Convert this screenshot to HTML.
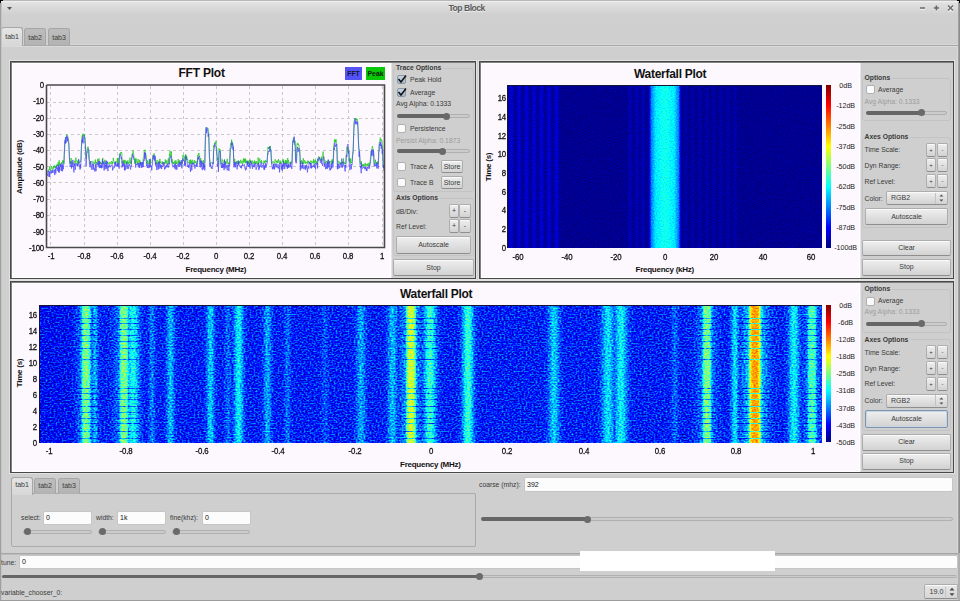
<!DOCTYPE html>
<html><head><meta charset="utf-8">
<style>
*{margin:0;padding:0;box-sizing:border-box}
html,body{width:960px;height:601px;overflow:hidden;background:#cfcfcf;font-family:"Liberation Sans",sans-serif;color:#333}
.a{position:absolute}
.t{position:absolute;white-space:nowrap;font-size:6.8px;line-height:7px;color:#3a3a3a}
.b{font-weight:bold}
.tk{position:absolute;white-space:nowrap;font-size:9.3px;line-height:8px;color:#111;letter-spacing:-0.2px;transform:scaleX(0.84);-webkit-text-stroke:0.3px #111}
.btn{position:absolute;border:1px solid #adadad;border-bottom-color:#8e8e8e;border-radius:2px;background:linear-gradient(#efefef,#d2d2d2);box-shadow:inset 0 1px 0 #fafafa;font-size:7px;color:#3a3a3a;text-align:center;white-space:nowrap}
.cb{position:absolute;width:9px;height:9px;border:1px solid #b0b0b0;border-radius:2px;background:#fbfbfb}
.cbc{background:linear-gradient(#c8d4e0,#a9b9cc);border-color:#8897a8}
.grp{position:absolute;border:1px solid #c3c3c3;border-radius:3px}
.frame{position:absolute;border:1px solid #484848;box-shadow:0 0 0 1px #e2e2e2, inset 1px 1px 0 #808080}
.plot{position:absolute;background:#fdf8fd;box-shadow:inset 1px 1px 0 #fff, inset -1px -1px 0 #fff}
.side{position:absolute;background:#cfcfcf;border-left:1px solid #e4e4e4}
.groove{position:absolute;height:3.5px;margin-top:0.25px;border-radius:2px;background:#cbcbcb;border:1px solid #b0b0b0}
.gfill{position:absolute;height:3.5px;margin-top:0.25px;border-radius:2px;background:#666}
.handle{position:absolute;width:7px;height:7px;margin:0.5px 0 0 0.5px;border-radius:50%;background:#6a6a6a}
.field{position:absolute;background:#fcfcfc;border:1px solid #c6c6c6;border-radius:2px;font-size:7px;color:#111;padding-left:2px;white-space:nowrap}
.tab{position:absolute;border:1px solid #a6a6a6;border-bottom:none;border-radius:3px 3px 0 0;background:linear-gradient(#bdbdbd,#b3b3b3);font-size:7px;color:#3a3a3a;text-align:center}
.tabsel{background:linear-gradient(#e4e4e4,#d7d7d7)}
.grid{position:absolute}
.tkc{position:absolute;white-space:nowrap;font-size:7.1px;line-height:8px;color:#1a1a1a}
</style></head><body>
<!-- title bar -->
<div class="a" style="left:0;top:0;width:960px;height:24px;background:linear-gradient(#b8b8b8 0,#b8b8b8 1px,#f2f2f2 1px,#e0e0e0 3px,#d0d0d0 15px)"></div>
<div class="a" style="left:0;top:2px;width:1px;height:599px;background:#a0a0a0"></div>
<div class="a" style="left:957px;top:46px;width:1px;height:507px;background:#d8d8d8"></div><div class="a" style="left:958px;top:2px;width:2px;height:551px;background:linear-gradient(90deg,#a8a8a8,#858585)"></div><div class="a" style="left:958px;top:553px;width:2px;height:48px;background:#b0b0b0"></div>
<div class="a" style="left:0;top:600px;width:960px;height:1px;background:#9c9c9c"></div>
<div class="t b" style="left:448.5px;top:4px;font-size:8.6px;line-height:9px;color:#5a5a5a;letter-spacing:-0.5px;text-shadow:0 1px 0 rgba(255,255,255,0.6)">Top Block</div>
<svg class="a" style="left:0;top:0" width="960" height="16">
 <g stroke="#fff" stroke-width="1.6" opacity="0.7"><path d="M920 9h5M933.8 9h5.2M936.4 6.5v5M948 6.6L953 11.6M953 6.6L948 11.6"/></g>
 <g stroke="#686868" stroke-width="1.6"><path d="M920 8h5M933.8 8h5.2M936.4 5.5v5"/><path d="M948 5.6L953 10.6M953 5.6L948 10.6" stroke-width="1.4"/></g>
 <path d="M7 7h5l-2.5 3z" fill="#555"/>
 <path d="M0 0h3v1h-2v2h-1z M960 0h-3v1h2v2h1z" fill="#000"/>
</svg>

<!-- top tabs -->
<div class="a" style="left:1px;top:44px;width:957px;height:1px;background:#d8d8d8"></div><div class="a" style="left:1px;top:45px;width:957px;height:1px;background:#a8a8a8"></div><div class="a" style="left:1px;top:46px;width:957px;height:1px;background:#dadada"></div>
<div class="tab" style="left:24px;top:28px;width:22px;height:17px;line-height:17px">tab2</div>
<div class="tab" style="left:48px;top:28px;width:22px;height:17px;line-height:17px">tab3</div>
<div class="tab tabsel" style="left:1px;top:27px;width:22px;height:19px;line-height:18px">tab1</div>
<div class="a" style="left:1px;top:3px;width:1px;height:597px;background:#c4c4c4"></div>
<div class="a" style="left:1px;top:553px;width:957px;height:1px;background:#a6a6a6"></div><div class="a" style="left:1px;top:554px;width:957px;height:1px;background:#bcbcbc"></div>

<!-- ===== FFT frame ===== -->
<div class="frame" style="left:10px;top:61px;width:466px;height:218px"></div>
<div class="plot" style="left:12px;top:63px;width:379px;height:215px"></div>
<div class="side" style="left:391px;top:63px;width:84px;height:215px"></div>
<div class="t b" style="left:178.5px;top:67px;font-size:12px;line-height:12px;color:#111;letter-spacing:-0.22px">FFT Plot</div>
<div class="a" style="left:345px;top:67px;width:17px;height:13px;background:#5252f6;font-size:6.8px;font-weight:bold;line-height:13.5px;text-align:center;color:#151530">FFT</div>
<div class="a" style="left:366px;top:67px;width:19px;height:13px;background:#08c808;font-size:6.8px;font-weight:bold;line-height:13.5px;text-align:center;color:#0a200a">Peak</div>
<svg class="a" style="left:0;top:0" width="960" height="601">
 <g stroke="#c9c9c9" stroke-width="1" stroke-dasharray="3,3" shape-rendering="crispEdges">
  <path d="M47 102.5H384"/>
<path d="M47 118.5H384"/>
<path d="M47 134.5H384"/>
<path d="M47 150.5H384"/>
<path d="M47 166.5H384"/>
<path d="M47 182.5H384"/>
<path d="M47 199.5H384"/>
<path d="M47 215.5H384"/>
<path d="M47 231.5H384"/>
<path d="M50.5 86V247"/>
<path d="M84.5 86V247"/>
<path d="M117.5 86V247"/>
<path d="M150.5 86V247"/>
<path d="M183.5 86V247"/>
<path d="M216.5 86V247"/>
<path d="M249.5 86V247"/>
<path d="M282.5 86V247"/>
<path d="M315.5 86V247"/>
<path d="M348.5 86V247"/>
<path d="M382.5 86V247"/>
 </g>
 <polyline fill="none" stroke="#18c818" stroke-width="0.7" points="47.0,171.1 47.3,171.4 47.7,171.5 48.0,170.8 48.4,171.0 48.7,171.0 49.0,169.2 49.4,169.9 49.7,166.8 50.1,169.7 50.4,170.6 50.7,169.0 51.1,169.4 51.4,166.0 51.8,167.1 52.1,168.1 52.4,169.4 52.8,168.9 53.1,167.1 53.5,166.2 53.8,168.5 54.1,165.3 54.5,165.6 54.8,167.8 55.2,166.4 55.5,168.1 55.8,166.1 56.2,165.6 56.5,166.9 56.9,164.4 57.2,165.9 57.5,164.2 57.9,165.8 58.2,162.0 58.6,166.2 58.9,165.2 59.2,160.3 59.6,164.5 59.9,163.8 60.3,165.6 60.6,164.8 60.9,164.1 61.3,164.2 61.6,162.2 62.0,163.9 62.3,163.5 62.6,160.4 63.0,162.2 63.3,160.6 63.7,164.0 64.0,160.7 64.3,150.6 64.7,143.7 65.0,141.2 65.4,137.6 65.7,137.8 66.0,137.8 66.4,136.9 66.7,135.0 67.1,134.5 67.4,136.4 67.7,136.4 68.1,139.1 68.4,139.2 68.8,141.3 69.1,149.2 69.4,156.6 69.8,163.4 70.1,163.3 70.5,161.9 70.8,163.3 71.1,158.0 71.5,163.6 71.8,163.6 72.2,162.6 72.5,162.9 72.8,163.3 73.2,164.0 73.5,164.0 73.9,163.0 74.2,161.4 74.5,161.9 74.9,160.6 75.2,163.3 75.6,162.7 75.9,157.7 76.2,160.7 76.6,160.6 76.9,161.3 77.3,163.7 77.6,163.9 77.9,160.5 78.3,163.5 78.6,161.4 79.0,163.5 79.3,162.5 79.6,162.6 80.0,160.5 80.3,161.9 80.7,160.6 81.0,160.0 81.3,149.5 81.7,139.3 82.0,136.1 82.4,134.8 82.7,137.2 83.0,133.6 83.4,135.2 83.7,135.7 84.1,134.6 84.4,134.3 84.7,138.5 85.1,137.9 85.4,144.6 85.8,154.0 86.1,158.4 86.4,152.1 86.8,151.0 87.1,149.3 87.5,147.4 87.8,147.9 88.1,146.7 88.5,149.2 88.8,149.8 89.2,151.5 89.5,159.3 89.8,164.1 90.2,163.6 90.5,164.1 90.9,161.8 91.2,161.1 91.5,161.6 91.9,162.7 92.2,162.3 92.6,162.2 92.9,161.3 93.2,162.6 93.6,162.8 93.9,162.3 94.3,163.9 94.6,163.3 94.9,163.4 95.3,159.5 95.6,163.5 96.0,162.1 96.3,163.1 96.6,162.4 97.0,163.4 97.3,162.6 97.7,159.1 98.0,161.0 98.3,163.1 98.7,159.9 99.0,158.3 99.4,162.5 99.7,163.9 100.0,162.0 100.4,164.0 100.7,162.2 101.1,163.7 101.4,163.3 101.7,163.9 102.1,162.1 102.4,161.4 102.8,157.9 103.1,163.0 103.4,163.2 103.8,162.9 104.1,161.7 104.5,162.5 104.8,159.8 105.1,162.6 105.5,163.7 105.8,161.8 106.2,161.7 106.5,160.9 106.8,161.8 107.2,162.2 107.5,163.6 107.9,162.4 108.2,162.9 108.5,163.9 108.9,163.3 109.2,163.7 109.6,162.3 109.9,162.2 110.2,164.2 110.6,163.8 110.9,163.8 111.3,161.1 111.6,161.6 111.9,163.7 112.3,161.8 112.6,164.0 113.0,162.4 113.3,157.8 113.6,160.4 114.0,160.9 114.3,162.9 114.7,163.8 115.0,162.5 115.3,162.7 115.7,161.8 116.0,161.6 116.4,162.4 116.7,161.6 117.0,162.0 117.4,158.0 117.7,163.7 118.1,157.9 118.4,162.1 118.7,164.2 119.1,163.7 119.4,154.6 119.8,155.5 120.1,153.0 120.4,153.6 120.8,152.1 121.1,152.9 121.5,152.1 121.8,152.6 122.1,162.8 122.5,164.1 122.8,160.8 123.2,162.9 123.5,162.0 123.8,159.8 124.2,161.9 124.5,164.1 124.9,159.9 125.2,161.6 125.5,160.8 125.9,163.6 126.2,162.5 126.6,161.4 126.9,163.0 127.2,161.6 127.6,164.2 127.9,160.3 128.3,164.1 128.6,163.4 128.9,162.3 129.3,163.3 129.6,162.6 130.0,157.6 130.3,164.1 130.6,163.7 131.0,160.8 131.3,163.4 131.7,157.0 132.0,154.3 132.3,154.7 132.7,153.2 133.0,150.4 133.4,152.2 133.7,154.7 134.0,156.3 134.4,158.6 134.7,163.4 135.1,163.9 135.4,158.4 135.7,163.6 136.1,158.5 136.4,161.1 136.8,161.9 137.1,163.8 137.4,161.6 137.8,161.7 138.1,159.0 138.5,164.1 138.8,164.1 139.1,163.6 139.5,162.5 139.8,159.9 140.2,164.1 140.5,163.2 140.8,162.5 141.2,163.0 141.5,162.4 141.9,164.2 142.2,162.2 142.5,163.4 142.9,161.4 143.2,158.6 143.6,156.5 143.9,156.2 144.2,150.5 144.6,151.0 144.9,149.7 145.3,152.9 145.6,154.2 145.9,153.9 146.3,156.1 146.6,163.4 147.0,163.6 147.3,163.8 147.6,160.4 148.0,163.9 148.3,162.5 148.7,163.3 149.0,162.9 149.3,159.1 149.7,164.2 150.0,159.7 150.4,163.8 150.7,163.2 151.0,163.3 151.4,162.3 151.7,162.0 152.1,161.7 152.4,159.7 152.7,155.9 153.1,155.1 153.4,154.6 153.8,154.4 154.1,153.4 154.4,153.7 154.8,155.5 155.1,157.8 155.5,163.8 155.8,163.4 156.1,162.5 156.5,164.2 156.8,160.7 157.2,159.9 157.5,163.9 157.8,163.3 158.2,163.7 158.5,162.8 158.9,160.9 159.2,163.4 159.5,163.2 159.9,158.8 160.2,162.6 160.6,162.9 160.9,161.4 161.2,163.6 161.6,163.7 161.9,163.1 162.3,164.0 162.6,161.6 162.9,163.3 163.3,162.4 163.6,162.4 164.0,163.3 164.3,163.7 164.6,164.2 165.0,163.3 165.3,159.4 165.7,163.6 166.0,162.0 166.3,162.7 166.7,160.4 167.0,164.1 167.4,163.8 167.7,162.6 168.0,160.2 168.4,158.4 168.7,164.2 169.1,159.2 169.4,154.5 169.7,156.1 170.1,150.8 170.4,156.3 170.8,156.4 171.1,155.2 171.4,151.4 171.8,162.0 172.1,159.0 172.5,163.6 172.8,162.2 173.1,162.6 173.5,164.0 173.8,162.0 174.2,163.8 174.5,163.8 174.8,160.7 175.2,161.9 175.5,163.4 175.9,160.3 176.2,162.0 176.5,163.8 176.9,161.8 177.2,163.5 177.6,164.0 177.9,163.3 178.2,159.0 178.6,162.6 178.9,163.3 179.3,160.3 179.6,162.4 179.9,164.1 180.3,162.5 180.6,164.0 181.0,161.4 181.3,162.6 181.6,163.0 182.0,163.0 182.3,163.5 182.7,156.7 183.0,154.9 183.3,156.5 183.7,155.8 184.0,157.8 184.4,156.7 184.7,163.3 185.0,163.5 185.4,154.9 185.7,154.2 186.1,156.9 186.4,156.1 186.7,155.9 187.1,157.5 187.4,160.0 187.8,159.5 188.1,163.1 188.4,162.5 188.8,163.2 189.1,162.6 189.5,162.4 189.8,160.1 190.1,163.2 190.5,159.6 190.8,164.1 191.2,160.9 191.5,164.1 191.8,163.5 192.2,159.7 192.5,163.7 192.9,163.1 193.2,163.7 193.5,163.2 193.9,162.2 194.2,160.0 194.6,163.8 194.9,162.3 195.2,161.9 195.6,162.9 195.9,160.9 196.3,162.9 196.6,164.0 196.9,162.8 197.3,162.7 197.6,155.3 198.0,156.0 198.3,153.6 198.6,154.5 199.0,153.0 199.3,156.8 199.7,156.1 200.0,161.3 200.3,162.2 200.7,158.0 201.0,163.0 201.4,162.6 201.7,164.0 202.0,162.1 202.4,161.4 202.7,163.8 203.1,163.9 203.4,160.1 203.7,162.4 204.1,162.1 204.4,162.6 204.8,162.5 205.1,149.7 205.4,134.2 205.8,132.1 206.1,129.3 206.5,130.3 206.8,128.6 207.1,127.5 207.5,128.2 207.8,128.4 208.2,128.5 208.5,131.3 208.8,133.9 209.2,147.2 209.5,157.8 209.9,159.1 210.2,163.4 210.5,163.5 210.9,163.2 211.2,162.4 211.6,162.7 211.9,162.6 212.2,162.6 212.6,163.3 212.9,163.7 213.3,160.6 213.6,145.4 213.9,146.7 214.3,145.4 214.6,142.7 215.0,142.6 215.3,143.9 215.6,143.6 216.0,140.9 216.3,146.3 216.7,148.1 217.0,155.7 217.3,157.9 217.7,159.8 218.0,157.7 218.4,163.9 218.7,163.5 219.0,148.4 219.4,150.6 219.7,149.0 220.1,149.7 220.4,151.3 220.7,157.4 221.1,162.4 221.4,164.1 221.8,163.8 222.1,159.4 222.4,159.5 222.8,160.5 223.1,162.2 223.5,162.5 223.8,162.0 224.1,161.8 224.5,159.5 224.8,162.4 225.2,162.4 225.5,164.0 225.8,161.0 226.2,163.7 226.5,163.4 226.9,162.5 227.2,158.8 227.5,162.4 227.9,164.1 228.2,163.9 228.6,162.5 228.9,163.8 229.2,162.9 229.6,163.8 229.9,158.7 230.3,147.2 230.6,143.6 230.9,144.5 231.3,142.5 231.6,139.7 232.0,142.6 232.3,142.5 232.6,142.3 233.0,145.6 233.3,148.2 233.7,157.2 234.0,162.1 234.3,162.7 234.7,158.9 235.0,163.4 235.4,163.2 235.7,162.7 236.0,164.0 236.4,163.7 236.7,161.0 237.1,164.0 237.4,162.8 237.7,162.3 238.1,162.7 238.4,160.4 238.8,164.0 239.1,161.5 239.4,161.5 239.8,163.1 240.1,163.5 240.5,160.7 240.8,159.8 241.1,162.3 241.5,163.3 241.8,161.3 242.2,160.7 242.5,163.8 242.8,163.9 243.2,162.4 243.5,158.4 243.9,162.0 244.2,162.7 244.5,158.9 244.9,161.5 245.2,158.4 245.6,163.3 245.9,159.7 246.2,162.7 246.6,163.3 246.9,160.9 247.3,161.7 247.6,163.7 247.9,160.7 248.3,163.1 248.6,164.1 249.0,161.0 249.3,160.4 249.6,162.9 250.0,160.8 250.3,159.6 250.7,162.2 251.0,161.2 251.3,163.2 251.7,163.8 252.0,160.6 252.4,160.8 252.7,162.7 253.0,163.5 253.4,162.5 253.7,161.9 254.1,163.9 254.4,160.4 254.7,162.6 255.1,163.5 255.4,161.5 255.8,163.7 256.1,162.6 256.4,161.1 256.8,163.8 257.1,163.4 257.5,162.8 257.8,164.2 258.1,157.5 258.5,164.1 258.8,164.0 259.2,161.6 259.5,160.4 259.8,158.4 260.2,162.5 260.5,161.5 260.9,162.0 261.2,162.1 261.5,160.2 261.9,162.6 262.2,162.8 262.6,163.5 262.9,163.8 263.2,162.4 263.6,162.5 263.9,160.7 264.3,161.5 264.6,163.4 264.9,160.7 265.3,162.4 265.6,160.3 266.0,160.8 266.3,161.9 266.6,161.0 267.0,162.3 267.3,157.6 267.7,150.9 268.0,146.9 268.3,149.0 268.7,147.2 269.0,148.7 269.4,147.4 269.7,148.4 270.0,145.9 270.4,149.1 270.7,151.4 271.1,150.9 271.4,158.9 271.7,163.2 272.1,163.8 272.4,161.6 272.8,161.5 273.1,162.2 273.4,161.6 273.8,161.9 274.1,162.8 274.5,162.4 274.8,163.4 275.1,159.3 275.5,160.5 275.8,161.3 276.2,162.1 276.5,161.0 276.8,162.7 277.2,160.4 277.5,162.9 277.9,163.0 278.2,162.5 278.5,159.2 278.9,161.0 279.2,161.8 279.6,163.8 279.9,163.5 280.2,160.6 280.6,163.1 280.9,162.3 281.3,163.2 281.6,163.9 281.9,161.6 282.3,161.0 282.6,160.6 283.0,161.6 283.3,159.3 283.6,163.5 284.0,161.8 284.3,164.0 284.7,162.4 285.0,162.7 285.3,160.2 285.7,163.1 286.0,159.9 286.4,163.1 286.7,161.1 287.0,161.0 287.4,163.6 287.7,158.0 288.1,161.4 288.4,160.1 288.7,163.8 289.1,163.8 289.4,162.2 289.8,162.6 290.1,162.9 290.4,163.5 290.8,164.1 291.1,162.4 291.5,161.6 291.8,162.7 292.1,159.3 292.5,146.1 292.8,142.2 293.2,139.8 293.5,137.6 293.8,140.4 294.2,140.5 294.5,140.2 294.9,142.4 295.2,141.0 295.5,155.4 295.9,161.8 296.2,159.7 296.6,153.1 296.9,144.9 297.2,143.3 297.6,143.0 297.9,145.1 298.3,143.7 298.6,145.1 298.9,145.0 299.3,147.4 299.6,148.7 300.0,153.0 300.3,163.0 300.6,164.0 301.0,163.6 301.3,160.2 301.7,162.4 302.0,164.0 302.3,161.6 302.7,163.6 303.0,159.1 303.4,158.2 303.7,164.0 304.0,163.8 304.4,160.9 304.7,160.1 305.1,162.1 305.4,163.5 305.7,161.7 306.1,162.7 306.4,162.4 306.8,162.0 307.1,164.1 307.4,163.9 307.8,160.6 308.1,162.3 308.5,161.1 308.8,161.0 309.1,163.2 309.5,162.2 309.8,163.6 310.2,164.1 310.5,162.6 310.8,160.6 311.2,162.4 311.5,161.9 311.9,161.1 312.2,162.7 312.5,161.9 312.9,163.1 313.2,163.6 313.6,158.9 313.9,162.3 314.2,160.4 314.6,163.5 314.9,161.8 315.3,161.8 315.6,159.8 315.9,163.1 316.3,163.9 316.6,161.2 317.0,162.9 317.3,164.0 317.6,158.9 318.0,159.4 318.3,157.7 318.7,156.4 319.0,157.7 319.3,159.2 319.7,157.0 320.0,159.0 320.4,160.9 320.7,159.2 321.0,159.4 321.4,159.8 321.7,156.6 322.1,160.7 322.4,158.1 322.7,157.5 323.1,151.6 323.4,157.4 323.8,158.2 324.1,159.3 324.4,159.6 324.8,160.0 325.1,164.1 325.5,161.8 325.8,162.8 326.1,160.8 326.5,161.5 326.8,162.4 327.2,161.4 327.5,162.7 327.8,163.4 328.2,161.8 328.5,159.8 328.9,161.3 329.2,163.5 329.5,163.0 329.9,162.0 330.2,161.6 330.6,161.1 330.9,162.3 331.2,164.2 331.6,162.7 331.9,159.5 332.3,163.0 332.6,159.7 332.9,163.3 333.3,158.2 333.6,145.6 334.0,145.0 334.3,142.8 334.6,139.3 335.0,141.8 335.3,140.0 335.7,142.2 336.0,139.2 336.3,141.8 336.7,143.7 337.0,150.1 337.4,160.6 337.7,162.2 338.0,163.7 338.4,162.7 338.7,160.8 339.1,161.8 339.4,162.5 339.7,163.6 340.1,164.2 340.4,162.1 340.8,162.8 341.1,162.9 341.4,164.1 341.8,162.6 342.1,162.1 342.5,163.4 342.8,161.7 343.1,162.8 343.5,158.5 343.8,163.5 344.2,162.7 344.5,163.8 344.8,162.5 345.2,162.7 345.5,163.7 345.9,162.8 346.2,155.9 346.5,150.1 346.9,146.7 347.2,148.1 347.6,149.2 347.9,148.1 348.2,149.7 348.6,149.4 348.9,150.6 349.3,161.8 349.6,160.5 349.9,158.6 350.3,163.7 350.6,158.4 351.0,162.4 351.3,162.0 351.6,162.9 352.0,162.2 352.3,158.1 352.7,152.2 353.0,152.3 353.3,145.0 353.7,135.7 354.0,122.1 354.4,120.3 354.7,120.7 355.0,118.5 355.4,118.1 355.7,119.9 356.1,118.0 356.4,119.7 356.7,120.4 357.1,119.0 357.4,119.3 357.8,122.2 358.1,129.4 358.4,138.5 358.8,147.6 359.1,148.2 359.5,150.5 359.8,158.3 360.1,162.7 360.5,163.9 360.8,162.6 361.2,161.0 361.5,166.6 361.8,165.5 362.2,166.1 362.5,164.6 362.9,166.6 363.2,164.5 363.5,166.5 363.9,164.0 364.2,164.2 364.6,165.7 364.9,166.0 365.2,162.9 365.6,165.1 365.9,166.1 366.3,164.8 366.6,165.0 366.9,164.1 367.3,163.6 367.6,165.8 368.0,164.1 368.3,165.8 368.6,164.6 369.0,162.6 369.3,166.6 369.7,165.1 370.0,162.8 370.3,160.0 370.7,155.6 371.0,151.3 371.4,152.1 371.7,150.2 372.0,147.9 372.4,146.0 372.7,147.3 373.1,148.8 373.4,150.9 373.7,153.7 374.1,161.7 374.4,164.1 374.8,163.8 375.1,163.2 375.4,159.7 375.8,164.0 376.1,162.7 376.5,163.8 376.8,162.8 377.1,163.1 377.5,161.4 377.8,163.8 378.2,164.1 378.5,157.4 378.8,148.1 379.2,143.2 379.5,141.9 379.9,141.9 380.2,137.6 380.5,140.7 380.9,139.9 381.2,139.2 381.6,141.3 381.9,142.3 382.2,143.2 382.6,144.4 382.9,154.8 383.3,168.1 383.6,167.6 383.9,166.5"/>
 <polyline fill="none" stroke="#4848f8" stroke-width="0.7" points="47.0,174.5 47.3,174.3 47.7,175.8 48.0,170.7 48.4,170.7 48.7,172.1 49.0,177.0 49.4,171.5 49.7,176.7 50.1,174.6 50.4,171.6 50.7,170.9 51.1,171.2 51.4,173.4 51.8,170.3 52.1,173.0 52.4,172.2 52.8,169.6 53.1,172.1 53.5,172.1 53.8,172.6 54.1,169.5 54.5,170.2 54.8,175.1 55.2,170.3 55.5,168.7 55.8,173.3 56.2,167.9 56.5,165.9 56.9,168.9 57.2,167.6 57.5,170.0 57.9,171.1 58.2,165.4 58.6,171.9 58.9,164.7 59.2,172.7 59.6,167.1 59.9,170.5 60.3,164.9 60.6,166.8 60.9,163.4 61.3,165.8 61.6,170.8 62.0,164.5 62.3,171.4 62.6,164.4 63.0,166.7 63.3,169.3 63.7,164.6 64.0,163.1 64.3,154.7 64.7,147.9 65.0,140.3 65.4,143.7 65.7,137.0 66.0,143.1 66.4,139.7 66.7,135.7 67.1,136.1 67.4,141.4 67.7,137.4 68.1,140.2 68.4,141.8 68.8,144.1 69.1,149.5 69.4,157.8 69.8,160.9 70.1,166.9 70.5,165.8 70.8,166.6 71.1,161.3 71.5,168.5 71.8,164.8 72.2,166.9 72.5,165.1 72.8,159.9 73.2,167.2 73.5,166.4 73.9,172.4 74.2,163.4 74.5,166.0 74.9,163.7 75.2,169.9 75.6,166.6 75.9,163.2 76.2,163.2 76.6,164.2 76.9,165.4 77.3,166.2 77.6,163.9 77.9,166.0 78.3,163.3 78.6,159.1 79.0,163.6 79.3,165.5 79.6,165.3 80.0,169.5 80.3,164.3 80.7,168.3 81.0,160.3 81.3,149.8 81.7,143.7 82.0,139.7 82.4,142.4 82.7,136.8 83.0,143.4 83.4,138.5 83.7,137.4 84.1,135.1 84.4,136.7 84.7,137.1 85.1,143.8 85.4,146.2 85.8,152.8 86.1,166.5 86.4,160.2 86.8,153.3 87.1,153.0 87.5,152.1 87.8,152.2 88.1,148.6 88.5,154.6 88.8,158.6 89.2,160.4 89.5,163.9 89.8,166.3 90.2,167.3 90.5,161.5 90.9,164.5 91.2,166.3 91.5,167.2 91.9,169.8 92.2,163.4 92.6,165.8 92.9,165.4 93.2,169.6 93.6,163.6 93.9,168.0 94.3,169.5 94.6,168.7 94.9,171.5 95.3,167.4 95.6,164.1 96.0,171.2 96.3,165.1 96.6,163.9 97.0,164.2 97.3,162.6 97.7,164.7 98.0,163.6 98.3,166.5 98.7,161.1 99.0,164.7 99.4,168.1 99.7,161.2 100.0,164.5 100.4,168.0 100.7,165.1 101.1,165.9 101.4,168.3 101.7,163.6 102.1,167.9 102.4,159.3 102.8,164.3 103.1,164.3 103.4,161.7 103.8,166.0 104.1,170.5 104.5,165.0 104.8,162.6 105.1,169.2 105.5,165.1 105.8,166.8 106.2,160.7 106.5,168.7 106.8,161.7 107.2,161.4 107.5,167.9 107.9,171.1 108.2,166.0 108.5,167.6 108.9,164.7 109.2,164.3 109.6,166.6 109.9,165.7 110.2,167.3 110.6,166.1 110.9,165.8 111.3,166.1 111.6,164.8 111.9,164.8 112.3,164.7 112.6,170.4 113.0,168.1 113.3,168.4 113.6,168.3 114.0,166.7 114.3,167.7 114.7,164.6 115.0,162.2 115.3,165.9 115.7,161.8 116.0,163.3 116.4,166.2 116.7,166.5 117.0,164.4 117.4,166.3 117.7,162.8 118.1,165.6 118.4,166.6 118.7,163.4 119.1,168.7 119.4,158.1 119.8,155.3 120.1,153.9 120.4,154.9 120.8,156.0 121.1,158.6 121.5,157.2 121.8,160.2 122.1,167.5 122.5,164.4 122.8,166.4 123.2,161.4 123.5,163.2 123.8,166.3 124.2,163.9 124.5,170.4 124.9,164.3 125.2,170.2 125.5,167.3 125.9,165.7 126.2,164.3 126.6,162.2 126.9,169.0 127.2,168.4 127.6,166.0 127.9,164.6 128.3,168.8 128.6,166.3 128.9,166.0 129.3,164.1 129.6,166.0 130.0,166.2 130.3,168.2 130.6,169.5 131.0,165.5 131.3,166.4 131.7,159.0 132.0,158.0 132.3,156.8 132.7,153.8 133.0,157.0 133.4,156.5 133.7,159.3 134.0,159.4 134.4,160.0 134.7,160.2 135.1,163.1 135.4,163.1 135.7,167.6 136.1,164.4 136.4,165.0 136.8,164.0 137.1,164.6 137.4,164.6 137.8,162.9 138.1,165.2 138.5,166.4 138.8,163.0 139.1,167.8 139.5,164.4 139.8,167.7 140.2,161.8 140.5,165.2 140.8,162.4 141.2,164.2 141.5,167.5 141.9,162.6 142.2,167.5 142.5,165.9 142.9,162.1 143.2,167.1 143.6,160.1 143.9,159.5 144.2,160.7 144.6,152.2 144.9,158.9 145.3,152.8 145.6,156.7 145.9,158.5 146.3,161.2 146.6,166.0 147.0,164.7 147.3,168.0 147.6,167.0 148.0,163.9 148.3,167.0 148.7,168.1 149.0,165.1 149.3,164.4 149.7,167.5 150.0,159.0 150.4,167.1 150.7,165.4 151.0,166.4 151.4,165.7 151.7,170.4 152.1,165.8 152.4,165.4 152.7,160.7 153.1,155.7 153.4,155.2 153.8,159.5 154.1,155.2 154.4,157.4 154.8,160.8 155.1,156.2 155.5,165.5 155.8,162.1 156.1,163.6 156.5,165.9 156.8,170.1 157.2,163.6 157.5,164.0 157.8,164.7 158.2,169.5 158.5,162.2 158.9,168.3 159.2,168.8 159.5,161.7 159.9,165.2 160.2,167.1 160.6,164.5 160.9,168.3 161.2,165.1 161.6,169.0 161.9,167.1 162.3,166.1 162.6,166.7 162.9,162.4 163.3,163.8 163.6,165.6 164.0,162.1 164.3,166.0 164.6,169.5 165.0,167.5 165.3,168.6 165.7,165.7 166.0,167.1 166.3,166.5 166.7,164.7 167.0,167.5 167.4,163.8 167.7,165.1 168.0,165.1 168.4,167.5 168.7,167.4 169.1,162.9 169.4,164.2 169.7,158.2 170.1,157.3 170.4,158.0 170.8,156.6 171.1,155.8 171.4,162.3 171.8,162.5 172.1,163.6 172.5,165.8 172.8,167.0 173.1,167.3 173.5,165.7 173.8,166.2 174.2,164.6 174.5,164.2 174.8,168.6 175.2,164.7 175.5,163.2 175.9,169.6 176.2,165.0 176.5,165.3 176.9,169.6 177.2,165.7 177.6,165.0 177.9,164.2 178.2,165.9 178.6,166.8 178.9,162.6 179.3,166.1 179.6,166.6 179.9,161.7 180.3,162.8 180.6,165.3 181.0,165.5 181.3,160.0 181.6,167.2 182.0,168.4 182.3,164.4 182.7,160.8 183.0,158.4 183.3,161.1 183.7,160.4 184.0,160.2 184.4,160.9 184.7,165.8 185.0,162.8 185.4,165.7 185.7,155.3 186.1,159.7 186.4,157.0 186.7,160.7 187.1,161.4 187.4,166.8 187.8,165.9 188.1,166.4 188.4,164.7 188.8,168.0 189.1,165.9 189.5,165.8 189.8,162.9 190.1,167.7 190.5,171.8 190.8,167.6 191.2,164.5 191.5,164.7 191.8,170.3 192.2,162.9 192.5,163.9 192.9,164.7 193.2,162.6 193.5,163.7 193.9,164.0 194.2,166.1 194.6,164.7 194.9,168.6 195.2,165.3 195.6,164.8 195.9,165.9 196.3,166.8 196.6,163.7 196.9,166.5 197.3,166.4 197.6,159.0 198.0,157.0 198.3,159.5 198.6,157.7 199.0,155.9 199.3,161.2 199.7,165.5 200.0,167.0 200.3,167.4 200.7,160.4 201.0,166.9 201.4,166.0 201.7,160.6 202.0,169.8 202.4,170.0 202.7,167.2 203.1,162.7 203.4,169.2 203.7,162.9 204.1,167.8 204.4,164.6 204.8,170.4 205.1,150.9 205.4,139.7 205.8,134.5 206.1,127.1 206.5,132.9 206.8,129.1 207.1,128.2 207.5,130.5 207.8,131.4 208.2,136.7 208.5,133.6 208.8,137.4 209.2,151.5 209.5,159.4 209.9,166.6 210.2,162.8 210.5,165.8 210.9,165.2 211.2,168.3 211.6,167.3 211.9,168.6 212.2,169.0 212.6,168.3 212.9,162.5 213.3,164.1 213.6,150.9 213.9,150.2 214.3,148.4 214.6,144.4 215.0,143.5 215.3,146.3 215.6,146.6 216.0,147.2 216.3,148.8 216.7,152.1 217.0,156.4 217.3,160.8 217.7,166.3 218.0,163.4 218.4,171.9 218.7,164.6 219.0,154.2 219.4,151.0 219.7,152.0 220.1,150.9 220.4,153.7 220.7,164.6 221.1,165.3 221.4,167.9 221.8,164.3 222.1,162.8 222.4,168.0 222.8,163.7 223.1,163.6 223.5,167.3 223.8,163.7 224.1,170.2 224.5,159.8 224.8,167.5 225.2,165.3 225.5,162.6 225.8,168.5 226.2,167.2 226.5,165.8 226.9,165.0 227.2,170.3 227.5,168.9 227.9,165.9 228.2,164.5 228.6,167.7 228.9,171.0 229.2,164.6 229.6,166.1 229.9,158.1 230.3,148.4 230.6,147.9 230.9,148.4 231.3,148.1 231.6,141.8 232.0,145.6 232.3,143.2 232.6,144.0 233.0,149.8 233.3,146.6 233.7,161.8 234.0,167.4 234.3,162.2 234.7,165.8 235.0,162.9 235.4,167.3 235.7,161.9 236.0,162.7 236.4,164.6 236.7,164.8 237.1,169.3 237.4,165.2 237.7,166.6 238.1,160.9 238.4,165.0 238.8,161.1 239.1,165.9 239.4,166.0 239.8,165.6 240.1,165.7 240.5,167.9 240.8,167.4 241.1,166.3 241.5,168.3 241.8,165.1 242.2,166.1 242.5,164.2 242.8,165.5 243.2,165.9 243.5,166.0 243.9,165.9 244.2,164.2 244.5,165.5 244.9,168.4 245.2,169.2 245.6,170.4 245.9,167.4 246.2,169.4 246.6,167.7 246.9,165.0 247.3,161.1 247.6,165.5 247.9,161.4 248.3,166.6 248.6,165.1 249.0,167.0 249.3,167.1 249.6,162.8 250.0,168.7 250.3,163.6 250.7,161.3 251.0,160.8 251.3,164.5 251.7,165.3 252.0,163.3 252.4,168.8 252.7,167.2 253.0,164.9 253.4,165.7 253.7,166.9 254.1,164.0 254.4,166.6 254.7,167.3 255.1,163.0 255.4,163.8 255.8,163.4 256.1,169.7 256.4,168.0 256.8,167.5 257.1,165.1 257.5,165.2 257.8,164.2 258.1,165.3 258.5,163.0 258.8,170.1 259.2,164.7 259.5,168.4 259.8,166.2 260.2,166.2 260.5,166.7 260.9,163.1 261.2,162.1 261.5,167.2 261.9,167.4 262.2,167.8 262.6,165.0 262.9,165.4 263.2,165.3 263.6,163.5 263.9,169.5 264.3,165.5 264.6,169.8 264.9,165.7 265.3,167.1 265.6,163.2 266.0,167.9 266.3,164.5 266.6,165.3 267.0,163.9 267.3,159.0 267.7,153.7 268.0,154.3 268.3,151.0 268.7,151.0 269.0,152.0 269.4,151.2 269.7,146.8 270.0,146.3 270.4,150.3 270.7,149.1 271.1,155.3 271.4,162.6 271.7,164.5 272.1,166.3 272.4,169.3 272.8,166.8 273.1,167.6 273.4,163.7 273.8,169.1 274.1,163.7 274.5,169.4 274.8,167.4 275.1,166.7 275.5,165.2 275.8,163.6 276.2,167.5 276.5,167.1 276.8,163.7 277.2,165.0 277.5,167.1 277.9,168.2 278.2,167.6 278.5,168.4 278.9,164.4 279.2,165.4 279.6,172.4 279.9,162.9 280.2,163.6 280.6,163.1 280.9,163.3 281.3,169.5 281.6,169.3 281.9,164.4 282.3,170.8 282.6,164.9 283.0,169.0 283.3,160.8 283.6,166.3 284.0,166.2 284.3,163.3 284.7,169.1 285.0,167.0 285.3,165.2 285.7,163.0 286.0,165.0 286.4,167.1 286.7,162.9 287.0,164.6 287.4,168.9 287.7,164.9 288.1,167.9 288.4,163.9 288.7,167.8 289.1,167.0 289.4,164.7 289.8,164.7 290.1,167.1 290.4,167.2 290.8,161.9 291.1,166.2 291.5,166.7 291.8,168.9 292.1,164.1 292.5,145.5 292.8,141.2 293.2,140.3 293.5,139.8 293.8,142.6 294.2,136.6 294.5,144.4 294.9,143.7 295.2,146.4 295.5,159.0 295.9,162.3 296.2,163.3 296.6,160.7 296.9,153.5 297.2,148.3 297.6,147.0 297.9,151.4 298.3,151.8 298.6,149.2 298.9,147.9 299.3,149.9 299.6,151.9 300.0,157.6 300.3,170.5 300.6,161.2 301.0,168.9 301.3,168.2 301.7,167.6 302.0,164.9 302.3,168.1 302.7,162.5 303.0,168.1 303.4,169.1 303.7,168.6 304.0,165.3 304.4,166.5 304.7,168.4 305.1,167.7 305.4,169.9 305.7,165.2 306.1,168.5 306.4,164.9 306.8,164.7 307.1,167.7 307.4,172.4 307.8,168.2 308.1,166.8 308.5,166.8 308.8,168.6 309.1,162.0 309.5,163.5 309.8,163.9 310.2,164.2 310.5,162.9 310.8,168.2 311.2,163.0 311.5,168.3 311.9,166.9 312.2,166.5 312.5,167.2 312.9,165.7 313.2,165.5 313.6,165.0 313.9,167.1 314.2,163.9 314.6,167.6 314.9,166.6 315.3,166.9 315.6,169.4 315.9,162.9 316.3,164.6 316.6,164.6 317.0,163.5 317.3,163.4 317.6,168.4 318.0,158.6 318.3,160.8 318.7,160.4 319.0,159.4 319.3,157.2 319.7,158.5 320.0,159.0 320.4,162.5 320.7,163.0 321.0,162.7 321.4,158.7 321.7,164.0 322.1,163.5 322.4,165.1 322.7,166.0 323.1,159.7 323.4,159.5 323.8,156.6 324.1,161.4 324.4,166.3 324.8,163.4 325.1,166.7 325.5,168.0 325.8,169.2 326.1,163.2 326.5,168.1 326.8,167.5 327.2,169.0 327.5,161.8 327.8,167.7 328.2,159.7 328.5,167.1 328.9,167.4 329.2,161.3 329.5,167.5 329.9,170.4 330.2,168.5 330.6,170.0 330.9,165.1 331.2,163.9 331.6,168.7 331.9,163.8 332.3,161.4 332.6,164.0 332.9,167.6 333.3,160.8 333.6,154.3 334.0,148.0 334.3,150.0 334.6,143.6 335.0,142.5 335.3,146.8 335.7,145.8 336.0,145.0 336.3,145.4 336.7,143.9 337.0,153.2 337.4,169.3 337.7,163.6 338.0,169.0 338.4,165.2 338.7,164.2 339.1,167.9 339.4,168.2 339.7,165.4 340.1,163.5 340.4,163.1 340.8,165.5 341.1,167.6 341.4,166.3 341.8,158.6 342.1,163.9 342.5,167.5 342.8,165.3 343.1,161.9 343.5,163.2 343.8,165.8 344.2,165.3 344.5,165.1 344.8,170.4 345.2,171.5 345.5,165.1 345.9,167.8 346.2,157.2 346.5,155.0 346.9,156.9 347.2,153.0 347.6,152.6 347.9,144.0 348.2,151.9 348.6,153.4 348.9,150.9 349.3,163.6 349.6,164.9 349.9,170.1 350.3,164.5 350.6,165.6 351.0,166.7 351.3,169.2 351.6,164.1 352.0,165.1 352.3,161.3 352.7,155.1 353.0,154.4 353.3,148.5 353.7,133.2 354.0,128.3 354.4,122.3 354.7,122.7 355.0,118.7 355.4,120.7 355.7,124.3 356.1,120.9 356.4,123.2 356.7,122.7 357.1,124.4 357.4,121.8 357.8,126.5 358.1,131.5 358.4,140.8 358.8,150.3 359.1,156.8 359.5,151.5 359.8,156.9 360.1,166.6 360.5,167.8 360.8,165.9 361.2,173.2 361.5,162.7 361.8,166.6 362.2,167.6 362.5,168.5 362.9,167.8 363.2,167.5 363.5,168.1 363.9,166.8 364.2,167.2 364.6,166.8 364.9,169.4 365.2,166.5 365.6,168.6 365.9,167.3 366.3,170.5 366.6,168.5 366.9,171.1 367.3,167.0 367.6,168.0 368.0,168.5 368.3,168.4 368.6,167.4 369.0,165.6 369.3,168.7 369.7,165.9 370.0,164.5 370.3,164.0 370.7,159.3 371.0,157.5 371.4,150.8 371.7,155.5 372.0,149.4 372.4,150.1 372.7,154.0 373.1,156.2 373.4,149.8 373.7,153.4 374.1,166.5 374.4,166.3 374.8,164.1 375.1,165.3 375.4,165.8 375.8,164.7 376.1,166.3 376.5,162.5 376.8,168.4 377.1,166.1 377.5,163.2 377.8,164.6 378.2,168.7 378.5,160.4 378.8,151.6 379.2,151.5 379.5,144.1 379.9,145.0 380.2,141.7 380.5,145.9 380.9,142.4 381.2,148.9 381.6,144.7 381.9,146.0 382.2,153.8 382.6,149.2 382.9,158.9 383.3,167.9 383.6,165.2 383.9,170.7"/>
 <path d="M46.5 85V247.5H384.5V85H46.5" fill="none" stroke="#4a4a4a" stroke-width="1.6"/>
</svg>
<div class="tk" style="left:4.2px;top:81.0px;width:40px;text-align:right;transform-origin:100% 50%;">0</div>
<div class="tk" style="left:4.2px;top:97.3px;width:40px;text-align:right;transform-origin:100% 50%;">-10</div>
<div class="tk" style="left:4.2px;top:113.6px;width:40px;text-align:right;transform-origin:100% 50%;">-20</div>
<div class="tk" style="left:4.2px;top:129.9px;width:40px;text-align:right;transform-origin:100% 50%;">-30</div>
<div class="tk" style="left:4.2px;top:146.2px;width:40px;text-align:right;transform-origin:100% 50%;">-40</div>
<div class="tk" style="left:4.2px;top:162.5px;width:40px;text-align:right;transform-origin:100% 50%;">-50</div>
<div class="tk" style="left:4.2px;top:178.8px;width:40px;text-align:right;transform-origin:100% 50%;">-60</div>
<div class="tk" style="left:4.2px;top:195.1px;width:40px;text-align:right;transform-origin:100% 50%;">-70</div>
<div class="tk" style="left:4.2px;top:211.4px;width:40px;text-align:right;transform-origin:100% 50%;">-80</div>
<div class="tk" style="left:4.2px;top:227.7px;width:40px;text-align:right;transform-origin:100% 50%;">-90</div>
<div class="tk" style="left:4.2px;top:244.0px;width:40px;text-align:right;transform-origin:100% 50%;">-100</div>
<div class="tk" style="left:30.5px;top:252.2px;width:40px;text-align:center;">-1</div>
<div class="tk" style="left:63.6px;top:252.2px;width:40px;text-align:center;">-0.8</div>
<div class="tk" style="left:96.7px;top:252.2px;width:40px;text-align:center;">-0.6</div>
<div class="tk" style="left:129.8px;top:252.2px;width:40px;text-align:center;">-0.4</div>
<div class="tk" style="left:162.9px;top:252.2px;width:40px;text-align:center;">-0.2</div>
<div class="tk" style="left:196.0px;top:252.2px;width:40px;text-align:center;">0</div>
<div class="tk" style="left:229.1px;top:252.2px;width:40px;text-align:center;">0.2</div>
<div class="tk" style="left:262.2px;top:252.2px;width:40px;text-align:center;">0.4</div>
<div class="tk" style="left:295.3px;top:252.2px;width:40px;text-align:center;">0.6</div>
<div class="tk" style="left:328.4px;top:252.2px;width:40px;text-align:center;">0.8</div>
<div class="tk" style="left:361.5px;top:252.2px;width:40px;text-align:center;">1</div>
<div class="t b" style="left:185.5px;top:265.5px;font-size:8px;line-height:8px;color:#111;letter-spacing:-0.25px">Frequency (MHz)</div>
<div class="t b" style="left:-10px;top:163px;font-size:8px;line-height:8px;color:#111;letter-spacing:-0.25px;transform:rotate(-90deg);transform-origin:center;width:60px;text-align:center">Amplitude (dB)</div>

<!-- FFT side panel -->
<div class="grp" style="left:393px;top:68px;width:81px;height:124px"></div>
<div class="t b" style="left:396px;top:64.2px;background:#cfcfcf;padding-right:2px">Trace Options</div>
<div class="cb cbc" style="left:397px;top:75px"></div>
<svg class="a" style="left:397px;top:74px" width="10" height="10"><path d="M1.5 5l2.5 3L9 1.5" fill="none" stroke="#111" stroke-width="1.5"/></svg>
<div class="t" style="left:410px;top:76px">Peak Hold</div>
<div class="cb cbc" style="left:397px;top:88px"></div>
<svg class="a" style="left:397px;top:87px" width="10" height="10"><path d="M1.5 5l2.5 3L9 1.5" fill="none" stroke="#111" stroke-width="1.5"/></svg>
<div class="t" style="left:410px;top:89px">Average</div>
<div class="t" style="left:396px;top:100px">Avg Alpha: 0.1333</div>
<div class="groove" style="left:397px;top:114px;width:73px"></div>
<div class="gfill" style="left:397px;top:114px;width:50px"></div>
<div class="handle" style="left:442px;top:112px"></div>
<div class="cb" style="left:397px;top:124px"></div>
<div class="t" style="left:410px;top:125px">Persistence</div>
<div class="t" style="left:396px;top:137px;color:#9c9c9c">Persist Alpha: 0.1873</div>
<div class="groove" style="left:397px;top:149px;width:73px"></div>
<div class="gfill" style="left:397px;top:149px;width:46px"></div>
<div class="handle" style="left:438px;top:147px"></div>
<div class="cb" style="left:397px;top:162px"></div>
<div class="t" style="left:410px;top:163px">Trace A</div>
<div class="btn" style="left:441px;top:159.5px;width:22px;height:13.5px;line-height:11.5px">Store</div>
<div class="cb" style="left:397px;top:178px"></div>
<div class="t" style="left:410px;top:179px">Trace B</div>
<div class="btn" style="left:441px;top:175.5px;width:22px;height:13.5px;line-height:11.5px">Store</div>
<div class="grp" style="left:393px;top:198px;width:81px;height:58px"></div>
<div class="t b" style="left:396px;top:194px;background:#cfcfcf;padding-right:2px">Axis Options</div>
<div class="t" style="left:396px;top:207.5px">dB/Div:</div>
<div class="btn" style="left:449px;top:204px;width:10px;height:14px;line-height:12px">+</div>
<div class="btn" style="left:459px;top:204px;width:12px;height:14px;line-height:12px">-</div>
<div class="t" style="left:396px;top:222.5px">Ref Level:</div>
<div class="btn" style="left:449px;top:219px;width:10px;height:14px;line-height:12px">+</div>
<div class="btn" style="left:459px;top:219px;width:12px;height:14px;line-height:12px">-</div>
<div class="btn" style="left:396px;top:236px;width:75px;height:18px;line-height:16px">Autoscale</div>
<div class="btn" style="left:393px;top:259px;width:81px;height:17px;line-height:15px">Stop</div>

<!-- ===== Top waterfall frame ===== -->
<div class="frame" style="left:479px;top:61px;width:475px;height:218px"></div>
<div class="plot" style="left:481px;top:63px;width:379px;height:215px"></div>
<div class="side" style="left:860px;top:63px;width:93px;height:215px"></div>
<div class="t b" style="left:634px;top:68px;font-size:12px;line-height:12px;color:#111;letter-spacing:-0.28px">Waterfall Plot</div>
<svg class="a" style="left:508px;top:85px" width="314" height="163"><defs><linearGradient id="gt" x1="0" x2="1" y1="0" y2="0"><stop offset="0.0016" stop-color="#070707"/><stop offset="0.0048" stop-color="#0c0c0c"/><stop offset="0.0080" stop-color="#131313"/><stop offset="0.0111" stop-color="#161616"/><stop offset="0.0143" stop-color="#131313"/><stop offset="0.0175" stop-color="#0c0c0c"/><stop offset="0.0207" stop-color="#070707"/><stop offset="0.0239" stop-color="#050505"/><stop offset="0.0271" stop-color="#090909"/><stop offset="0.0303" stop-color="#0f0f0f"/><stop offset="0.0334" stop-color="#151515"/><stop offset="0.0366" stop-color="#151515"/><stop offset="0.0398" stop-color="#0f0f0f"/><stop offset="0.0430" stop-color="#090909"/><stop offset="0.0462" stop-color="#050505"/><stop offset="0.0494" stop-color="#070707"/><stop offset="0.0525" stop-color="#0c0c0c"/><stop offset="0.0557" stop-color="#131313"/><stop offset="0.0589" stop-color="#161616"/><stop offset="0.0621" stop-color="#131313"/><stop offset="0.0653" stop-color="#0c0c0c"/><stop offset="0.0685" stop-color="#070707"/><stop offset="0.0717" stop-color="#050505"/><stop offset="0.0748" stop-color="#090909"/><stop offset="0.0780" stop-color="#0f0f0f"/><stop offset="0.0812" stop-color="#151515"/><stop offset="0.0844" stop-color="#151515"/><stop offset="0.0876" stop-color="#0f0f0f"/><stop offset="0.0908" stop-color="#090909"/><stop offset="0.0939" stop-color="#050505"/><stop offset="0.0971" stop-color="#070707"/><stop offset="0.1003" stop-color="#0c0c0c"/><stop offset="0.1035" stop-color="#131313"/><stop offset="0.1067" stop-color="#161616"/><stop offset="0.1099" stop-color="#131313"/><stop offset="0.1131" stop-color="#0c0c0c"/><stop offset="0.1162" stop-color="#070707"/><stop offset="0.1194" stop-color="#050505"/><stop offset="0.1226" stop-color="#090909"/><stop offset="0.1258" stop-color="#0f0f0f"/><stop offset="0.1290" stop-color="#151515"/><stop offset="0.1322" stop-color="#151515"/><stop offset="0.1354" stop-color="#0f0f0f"/><stop offset="0.1385" stop-color="#090909"/><stop offset="0.1417" stop-color="#050505"/><stop offset="0.1449" stop-color="#070707"/><stop offset="0.1481" stop-color="#0c0c0c"/><stop offset="0.1513" stop-color="#131313"/><stop offset="0.1545" stop-color="#161616"/><stop offset="0.1576" stop-color="#131313"/><stop offset="0.1608" stop-color="#0c0c0c"/><stop offset="0.1640" stop-color="#070707"/><stop offset="0.1672" stop-color="#050505"/><stop offset="0.1704" stop-color="#040404"/><stop offset="0.1736" stop-color="#040404"/><stop offset="0.1768" stop-color="#040404"/><stop offset="0.1799" stop-color="#040404"/><stop offset="0.1831" stop-color="#040404"/><stop offset="0.1863" stop-color="#040404"/><stop offset="0.1895" stop-color="#040404"/><stop offset="0.1927" stop-color="#040404"/><stop offset="0.1959" stop-color="#040404"/><stop offset="0.1990" stop-color="#040404"/><stop offset="0.2022" stop-color="#040404"/><stop offset="0.2054" stop-color="#040404"/><stop offset="0.2086" stop-color="#040404"/><stop offset="0.2118" stop-color="#040404"/><stop offset="0.2150" stop-color="#040404"/><stop offset="0.2182" stop-color="#040404"/><stop offset="0.2213" stop-color="#040404"/><stop offset="0.2245" stop-color="#040404"/><stop offset="0.2277" stop-color="#040404"/><stop offset="0.2309" stop-color="#040404"/><stop offset="0.2341" stop-color="#040404"/><stop offset="0.2373" stop-color="#040404"/><stop offset="0.2404" stop-color="#040404"/><stop offset="0.2436" stop-color="#040404"/><stop offset="0.2468" stop-color="#040404"/><stop offset="0.2500" stop-color="#040404"/><stop offset="0.2532" stop-color="#040404"/><stop offset="0.2564" stop-color="#040404"/><stop offset="0.2596" stop-color="#040404"/><stop offset="0.2627" stop-color="#040404"/><stop offset="0.2659" stop-color="#040404"/><stop offset="0.2691" stop-color="#040404"/><stop offset="0.2723" stop-color="#040404"/><stop offset="0.2755" stop-color="#040404"/><stop offset="0.2787" stop-color="#040404"/><stop offset="0.2818" stop-color="#040404"/><stop offset="0.2850" stop-color="#040404"/><stop offset="0.2882" stop-color="#040404"/><stop offset="0.2914" stop-color="#040404"/><stop offset="0.2946" stop-color="#040404"/><stop offset="0.2978" stop-color="#040404"/><stop offset="0.3010" stop-color="#040404"/><stop offset="0.3041" stop-color="#040404"/><stop offset="0.3073" stop-color="#040404"/><stop offset="0.3105" stop-color="#040404"/><stop offset="0.3137" stop-color="#040404"/><stop offset="0.3169" stop-color="#040404"/><stop offset="0.3201" stop-color="#040404"/><stop offset="0.3232" stop-color="#040404"/><stop offset="0.3264" stop-color="#040404"/><stop offset="0.3296" stop-color="#040404"/><stop offset="0.3328" stop-color="#040404"/><stop offset="0.3360" stop-color="#040404"/><stop offset="0.3392" stop-color="#040404"/><stop offset="0.3424" stop-color="#040404"/><stop offset="0.3455" stop-color="#040404"/><stop offset="0.3487" stop-color="#040404"/><stop offset="0.3519" stop-color="#040404"/><stop offset="0.3551" stop-color="#040404"/><stop offset="0.3583" stop-color="#040404"/><stop offset="0.3615" stop-color="#040404"/><stop offset="0.3646" stop-color="#040404"/><stop offset="0.3678" stop-color="#040404"/><stop offset="0.3710" stop-color="#040404"/><stop offset="0.3742" stop-color="#040404"/><stop offset="0.3774" stop-color="#040404"/><stop offset="0.3806" stop-color="#060606"/><stop offset="0.3838" stop-color="#0a0a0a"/><stop offset="0.3869" stop-color="#0d0d0d"/><stop offset="0.3901" stop-color="#0d0d0d"/><stop offset="0.3933" stop-color="#0a0a0a"/><stop offset="0.3965" stop-color="#060606"/><stop offset="0.3997" stop-color="#040404"/><stop offset="0.4029" stop-color="#060606"/><stop offset="0.4061" stop-color="#0a0a0a"/><stop offset="0.4092" stop-color="#0d0d0d"/><stop offset="0.4124" stop-color="#0d0d0d"/><stop offset="0.4156" stop-color="#0a0a0a"/><stop offset="0.4188" stop-color="#060606"/><stop offset="0.4220" stop-color="#060606"/><stop offset="0.4252" stop-color="#0a0a0a"/><stop offset="0.4283" stop-color="#0d0d0d"/><stop offset="0.4315" stop-color="#0d0d0d"/><stop offset="0.4347" stop-color="#0a0a0a"/><stop offset="0.4379" stop-color="#060606"/><stop offset="0.4411" stop-color="#040404"/><stop offset="0.4443" stop-color="#040404"/><stop offset="0.4475" stop-color="#040404"/><stop offset="0.4506" stop-color="#1a1a1a"/><stop offset="0.4538" stop-color="#2d2d2d"/><stop offset="0.4570" stop-color="#404040"/><stop offset="0.4602" stop-color="#464646"/><stop offset="0.4634" stop-color="#4c4c4c"/><stop offset="0.4666" stop-color="#535353"/><stop offset="0.4697" stop-color="#595959"/><stop offset="0.4729" stop-color="#5b5b5b"/><stop offset="0.4761" stop-color="#5c5c5c"/><stop offset="0.4793" stop-color="#5d5d5d"/><stop offset="0.4825" stop-color="#5e5e5e"/><stop offset="0.4857" stop-color="#606060"/><stop offset="0.4889" stop-color="#616161"/><stop offset="0.4920" stop-color="#626262"/><stop offset="0.4952" stop-color="#636363"/><stop offset="0.4984" stop-color="#636363"/><stop offset="0.5016" stop-color="#636363"/><stop offset="0.5048" stop-color="#636363"/><stop offset="0.5080" stop-color="#626262"/><stop offset="0.5111" stop-color="#616161"/><stop offset="0.5143" stop-color="#606060"/><stop offset="0.5175" stop-color="#5e5e5e"/><stop offset="0.5207" stop-color="#5d5d5d"/><stop offset="0.5239" stop-color="#5c5c5c"/><stop offset="0.5271" stop-color="#5b5b5b"/><stop offset="0.5303" stop-color="#595959"/><stop offset="0.5334" stop-color="#535353"/><stop offset="0.5366" stop-color="#4c4c4c"/><stop offset="0.5398" stop-color="#464646"/><stop offset="0.5430" stop-color="#404040"/><stop offset="0.5462" stop-color="#2d2d2d"/><stop offset="0.5494" stop-color="#1a1a1a"/><stop offset="0.5525" stop-color="#040404"/><stop offset="0.5557" stop-color="#040404"/><stop offset="0.5589" stop-color="#050505"/><stop offset="0.5621" stop-color="#080808"/><stop offset="0.5653" stop-color="#0a0a0a"/><stop offset="0.5685" stop-color="#0a0a0a"/><stop offset="0.5717" stop-color="#080808"/><stop offset="0.5748" stop-color="#050505"/><stop offset="0.5780" stop-color="#040404"/><stop offset="0.5812" stop-color="#050505"/><stop offset="0.5844" stop-color="#080808"/><stop offset="0.5876" stop-color="#0a0a0a"/><stop offset="0.5908" stop-color="#0a0a0a"/><stop offset="0.5939" stop-color="#080808"/><stop offset="0.5971" stop-color="#050505"/><stop offset="0.6003" stop-color="#040404"/><stop offset="0.6035" stop-color="#050505"/><stop offset="0.6067" stop-color="#080808"/><stop offset="0.6099" stop-color="#0a0a0a"/><stop offset="0.6131" stop-color="#0a0a0a"/><stop offset="0.6162" stop-color="#080808"/><stop offset="0.6194" stop-color="#050505"/><stop offset="0.6226" stop-color="#040404"/><stop offset="0.6258" stop-color="#050505"/><stop offset="0.6290" stop-color="#080808"/><stop offset="0.6322" stop-color="#0a0a0a"/><stop offset="0.6354" stop-color="#0a0a0a"/><stop offset="0.6385" stop-color="#080808"/><stop offset="0.6417" stop-color="#050505"/><stop offset="0.6449" stop-color="#040404"/><stop offset="0.6481" stop-color="#050505"/><stop offset="0.6513" stop-color="#080808"/><stop offset="0.6545" stop-color="#0a0a0a"/><stop offset="0.6576" stop-color="#0a0a0a"/><stop offset="0.6608" stop-color="#080808"/><stop offset="0.6640" stop-color="#050505"/><stop offset="0.6672" stop-color="#040404"/><stop offset="0.6704" stop-color="#050505"/><stop offset="0.6736" stop-color="#080808"/><stop offset="0.6768" stop-color="#0a0a0a"/><stop offset="0.6799" stop-color="#0a0a0a"/><stop offset="0.6831" stop-color="#080808"/><stop offset="0.6863" stop-color="#050505"/><stop offset="0.6895" stop-color="#040404"/><stop offset="0.6927" stop-color="#050505"/><stop offset="0.6959" stop-color="#080808"/><stop offset="0.6990" stop-color="#0a0a0a"/><stop offset="0.7022" stop-color="#0a0a0a"/><stop offset="0.7054" stop-color="#080808"/><stop offset="0.7086" stop-color="#050505"/><stop offset="0.7118" stop-color="#040404"/><stop offset="0.7150" stop-color="#050505"/><stop offset="0.7182" stop-color="#080808"/><stop offset="0.7213" stop-color="#0a0a0a"/><stop offset="0.7245" stop-color="#0a0a0a"/><stop offset="0.7277" stop-color="#080808"/><stop offset="0.7309" stop-color="#050505"/><stop offset="0.7341" stop-color="#040404"/><stop offset="0.7373" stop-color="#040404"/><stop offset="0.7404" stop-color="#040404"/><stop offset="0.7436" stop-color="#040404"/><stop offset="0.7468" stop-color="#040404"/><stop offset="0.7500" stop-color="#040404"/><stop offset="0.7532" stop-color="#040404"/><stop offset="0.7564" stop-color="#040404"/><stop offset="0.7596" stop-color="#040404"/><stop offset="0.7627" stop-color="#040404"/><stop offset="0.7659" stop-color="#040404"/><stop offset="0.7691" stop-color="#040404"/><stop offset="0.7723" stop-color="#040404"/><stop offset="0.7755" stop-color="#040404"/><stop offset="0.7787" stop-color="#040404"/><stop offset="0.7818" stop-color="#040404"/><stop offset="0.7850" stop-color="#040404"/><stop offset="0.7882" stop-color="#040404"/><stop offset="0.7914" stop-color="#040404"/><stop offset="0.7946" stop-color="#040404"/><stop offset="0.7978" stop-color="#040404"/><stop offset="0.8010" stop-color="#040404"/><stop offset="0.8041" stop-color="#040404"/><stop offset="0.8073" stop-color="#040404"/><stop offset="0.8105" stop-color="#040404"/><stop offset="0.8137" stop-color="#040404"/><stop offset="0.8169" stop-color="#040404"/><stop offset="0.8201" stop-color="#040404"/><stop offset="0.8232" stop-color="#040404"/><stop offset="0.8264" stop-color="#040404"/><stop offset="0.8296" stop-color="#040404"/><stop offset="0.8328" stop-color="#040404"/><stop offset="0.8360" stop-color="#040404"/><stop offset="0.8392" stop-color="#040404"/><stop offset="0.8424" stop-color="#040404"/><stop offset="0.8455" stop-color="#040404"/><stop offset="0.8487" stop-color="#040404"/><stop offset="0.8519" stop-color="#040404"/><stop offset="0.8551" stop-color="#040404"/><stop offset="0.8583" stop-color="#040404"/><stop offset="0.8615" stop-color="#040404"/><stop offset="0.8646" stop-color="#040404"/><stop offset="0.8678" stop-color="#040404"/><stop offset="0.8710" stop-color="#040404"/><stop offset="0.8742" stop-color="#040404"/><stop offset="0.8774" stop-color="#040404"/><stop offset="0.8806" stop-color="#040404"/><stop offset="0.8838" stop-color="#040404"/><stop offset="0.8869" stop-color="#040404"/><stop offset="0.8901" stop-color="#040404"/><stop offset="0.8933" stop-color="#040404"/><stop offset="0.8965" stop-color="#040404"/><stop offset="0.8997" stop-color="#040404"/><stop offset="0.9029" stop-color="#040404"/><stop offset="0.9061" stop-color="#040404"/><stop offset="0.9092" stop-color="#040404"/><stop offset="0.9124" stop-color="#040404"/><stop offset="0.9156" stop-color="#040404"/><stop offset="0.9188" stop-color="#040404"/><stop offset="0.9220" stop-color="#040404"/><stop offset="0.9252" stop-color="#040404"/><stop offset="0.9283" stop-color="#040404"/><stop offset="0.9315" stop-color="#040404"/><stop offset="0.9347" stop-color="#040404"/><stop offset="0.9379" stop-color="#040404"/><stop offset="0.9411" stop-color="#040404"/><stop offset="0.9443" stop-color="#040404"/><stop offset="0.9475" stop-color="#040404"/><stop offset="0.9506" stop-color="#040404"/><stop offset="0.9538" stop-color="#040404"/><stop offset="0.9570" stop-color="#040404"/><stop offset="0.9602" stop-color="#040404"/><stop offset="0.9634" stop-color="#040404"/><stop offset="0.9666" stop-color="#040404"/><stop offset="0.9697" stop-color="#040404"/><stop offset="0.9729" stop-color="#040404"/><stop offset="0.9761" stop-color="#040404"/><stop offset="0.9793" stop-color="#040404"/><stop offset="0.9825" stop-color="#040404"/><stop offset="0.9857" stop-color="#040404"/><stop offset="0.9889" stop-color="#040404"/><stop offset="0.9920" stop-color="#040404"/><stop offset="0.9952" stop-color="#040404"/><stop offset="0.9984" stop-color="#040404"/></linearGradient><filter id="ft" x="0" y="0" width="100%" height="100%" color-interpolation-filters="sRGB" filterUnits="userSpaceOnUse"><feTurbulence type="fractalNoise" baseFrequency="0.6 0.9" numOctaves="2" seed="9" result="n"/><feColorMatrix in="n" type="matrix" values="1 0 0 0 0 1 0 0 0 0 1 0 0 0 0 0 0 0 0 1" result="ng"/><feComposite in="SourceGraphic" in2="ng" operator="arithmetic" k1="0" k2="1" k3="0.140" k4="-0.070" result="t"/><feComponentTransfer in="t"><feFuncR type="table" tableValues="0.000 0.000 0.000 0.000 0.000 0.000 0.000 0.000 0.000 0.000 0.000 0.000 0.000 0.000 0.000 0.000 0.000 0.000 0.000 0.000 0.000 0.000 0.000 0.000 0.000 0.062 0.125 0.188 0.250 0.312 0.375 0.438 0.500 0.562 0.625 0.688 0.750 0.812 0.875 0.938 1.000 1.000 1.000 1.000 1.000 1.000 1.000 1.000 1.000 1.000 1.000 1.000 1.000 1.000 1.000 1.000 1.000 0.938 0.875 0.812 0.750 0.688 0.625 0.562 0.500"/><feFuncG type="table" tableValues="0.000 0.000 0.000 0.000 0.000 0.000 0.000 0.000 0.000 0.062 0.125 0.188 0.250 0.312 0.375 0.438 0.500 0.562 0.625 0.688 0.750 0.812 0.875 0.938 1.000 1.000 1.000 1.000 1.000 1.000 1.000 1.000 1.000 1.000 1.000 1.000 1.000 1.000 1.000 1.000 1.000 0.938 0.875 0.812 0.750 0.688 0.625 0.562 0.500 0.438 0.375 0.312 0.250 0.188 0.125 0.062 0.000 0.000 0.000 0.000 0.000 0.000 0.000 0.000 0.000"/><feFuncB type="table" tableValues="0.500 0.562 0.625 0.688 0.750 0.812 0.875 0.938 1.000 1.000 1.000 1.000 1.000 1.000 1.000 1.000 1.000 1.000 1.000 1.000 1.000 1.000 1.000 1.000 1.000 0.938 0.875 0.812 0.750 0.688 0.625 0.562 0.500 0.438 0.375 0.312 0.250 0.188 0.125 0.062 0.000 0.000 0.000 0.000 0.000 0.000 0.000 0.000 0.000 0.000 0.000 0.000 0.000 0.000 0.000 0.000 0.000 0.000 0.000 0.000 0.000 0.000 0.000 0.000 0.000"/><feFuncA type="linear" slope="0" intercept="1"/></feComponentTransfer></filter></defs><g filter="url(#ft)"><rect x="0" y="0" width="314" height="163" fill="url(#gt)"/></g></svg>
<div class="a" style="left:507px;top:85px;width:315px;height:1px;background:#141438"></div><div class="a" style="left:507px;top:85px;width:1px;height:163px;background:#141438"></div>
<div class="a" style="left:826px;top:85px;width:5px;height:163px;background:linear-gradient(#800000,#ff0000 12.5%,#ff8000 25%,#ffff00 37.5%,#80ff80 50%,#00ffff 62.5%,#0080ff 75%,#0000ff 87.5%,#000080)"></div>
<div class="tk" style="left:465.8px;top:243.7px;width:40px;text-align:right;transform-origin:100% 50%;">0</div>
<div class="tk" style="left:465.8px;top:225.0px;width:40px;text-align:right;transform-origin:100% 50%;">2</div>
<div class="tk" style="left:465.8px;top:206.3px;width:40px;text-align:right;transform-origin:100% 50%;">4</div>
<div class="tk" style="left:465.8px;top:187.7px;width:40px;text-align:right;transform-origin:100% 50%;">6</div>
<div class="tk" style="left:465.8px;top:169.0px;width:40px;text-align:right;transform-origin:100% 50%;">8</div>
<div class="tk" style="left:465.8px;top:150.3px;width:40px;text-align:right;transform-origin:100% 50%;">10</div>
<div class="tk" style="left:465.8px;top:131.6px;width:40px;text-align:right;transform-origin:100% 50%;">12</div>
<div class="tk" style="left:465.8px;top:112.9px;width:40px;text-align:right;transform-origin:100% 50%;">14</div>
<div class="tk" style="left:465.8px;top:94.3px;width:40px;text-align:right;transform-origin:100% 50%;">16</div>
<div class="tk" style="left:498.2px;top:252.6px;width:40px;text-align:center;">-60</div>
<div class="tk" style="left:547.1px;top:252.6px;width:40px;text-align:center;">-40</div>
<div class="tk" style="left:595.9px;top:252.6px;width:40px;text-align:center;">-20</div>
<div class="tk" style="left:644.8px;top:252.6px;width:40px;text-align:center;">0</div>
<div class="tk" style="left:693.6px;top:252.6px;width:40px;text-align:center;">20</div>
<div class="tk" style="left:742.5px;top:252.6px;width:40px;text-align:center;">40</div>
<div class="tk" style="left:791.3px;top:252.6px;width:40px;text-align:center;">60</div>
<div class="tkc" style="left:825.6px;top:81.9px;width:40px;text-align:center;">0dB</div>
<div class="tkc" style="left:825.6px;top:102.2px;width:40px;text-align:center;">-12dB</div>
<div class="tkc" style="left:825.6px;top:122.5px;width:40px;text-align:center;">-25dB</div>
<div class="tkc" style="left:825.6px;top:142.8px;width:40px;text-align:center;">-37dB</div>
<div class="tkc" style="left:825.6px;top:163.1px;width:40px;text-align:center;">-50dB</div>
<div class="tkc" style="left:825.6px;top:183.4px;width:40px;text-align:center;">-62dB</div>
<div class="tkc" style="left:825.6px;top:203.7px;width:40px;text-align:center;">-75dB</div>
<div class="tkc" style="left:825.6px;top:224.0px;width:40px;text-align:center;">-87dB</div>
<div class="tkc" style="left:825.6px;top:244.3px;width:40px;text-align:center;">-100dB</div>
<div class="t b" style="left:635.5px;top:265.5px;font-size:8px;line-height:8px;color:#111;letter-spacing:-0.25px">Frequency (kHz)</div>
<div class="t b" style="left:460.5px;top:162.5px;font-size:8px;line-height:8px;color:#111;letter-spacing:-0.25px;transform:rotate(-90deg);width:56px;text-align:center">Time (s)</div>

<!-- top waterfall side panel -->
<div class="grp" style="left:862px;top:78px;width:89px;height:43px"></div>
<div class="t b" style="left:864.5px;top:73.6px;background:#cfcfcf;padding-right:2px">Options</div>
<div class="cb" style="left:866px;top:85.3px"></div>
<div class="t" style="left:878px;top:85.8px">Average</div>
<div class="t" style="left:864.5px;top:98.0px;color:#9c9c9c">Avg Alpha: 0.1333</div>
<div class="groove" style="left:866px;top:110.8px;width:81px"></div>
<div class="gfill" style="left:866px;top:110.8px;width:55px"></div>
<div class="handle" style="left:917px;top:108.2px"></div>
<div class="grp" style="left:862px;top:137px;width:89px;height:91px"></div>
<div class="t b" style="left:864.5px;top:132.7px;background:#cfcfcf;padding-right:2px">Axes Options</div>
<div class="t" style="left:864.5px;top:146.0px">Time Scale:</div>
<div class="btn" style="left:926px;top:142.5px;width:10px;height:14px;line-height:12px;font-size:6px">+</div>
<div class="btn" style="left:937px;top:142.5px;width:11px;height:14px;line-height:12px;font-size:6px">-</div>
<div class="t" style="left:864.5px;top:161.5px">Dyn Range:</div>
<div class="btn" style="left:926px;top:158.0px;width:10px;height:14px;line-height:12px;font-size:6px">+</div>
<div class="btn" style="left:937px;top:158.0px;width:11px;height:14px;line-height:12px;font-size:6px">-</div>
<div class="t" style="left:864.5px;top:177.8px">Ref Level:</div>
<div class="btn" style="left:926px;top:174.2px;width:10px;height:14px;line-height:12px;font-size:6px">+</div>
<div class="btn" style="left:937px;top:174.2px;width:11px;height:14px;line-height:12px;font-size:6px">-</div>
<div class="t" style="left:864.5px;top:194.5px">Color:</div>
<div class="btn" style="left:886px;top:191.0px;width:62px;height:14px;line-height:12px;text-align:left;padding-left:4px">RGB2</div>
<div class="a" style="left:935px;top:192.5px;width:1px;height:11px;background:#c2c2c2"></div>
<svg class="a" style="left:938px;top:193.0px" width="7" height="10"><path d="M1.4 3.6L3.4 1.4L5.4 3.6z M1.4 6.4L3.4 8.6L5.4 6.4z" fill="#505050" stroke="none"/></svg>
<div class="btn" style="left:865px;top:207.5px;width:83px;height:17.0px;line-height:15.0px;">Autoscale</div>
<div class="btn" style="left:862px;top:240.0px;width:89px;height:16.2px;line-height:14.2px">Clear</div>
<div class="btn" style="left:862px;top:258.8px;width:89px;height:16.8px;line-height:14.8px">Stop</div>

<!-- ===== Bottom waterfall frame ===== -->
<div class="frame" style="left:10px;top:281px;width:944px;height:192px"></div>
<div class="plot" style="left:12px;top:283px;width:848px;height:189px"></div>
<div class="side" style="left:860px;top:283px;width:93px;height:189px"></div>
<div class="t b" style="left:400px;top:287.5px;font-size:12px;line-height:12px;color:#111;letter-spacing:-0.28px">Waterfall Plot</div>
<svg class="a" style="left:40px;top:305px" width="782" height="138"><defs><linearGradient id="gb" x1="0" x2="1" y1="0" y2="0"><stop offset="0.0006" stop-color="#212121"/><stop offset="0.0019" stop-color="#212121"/><stop offset="0.0032" stop-color="#212121"/><stop offset="0.0045" stop-color="#212121"/><stop offset="0.0058" stop-color="#212121"/><stop offset="0.0070" stop-color="#212121"/><stop offset="0.0083" stop-color="#212121"/><stop offset="0.0096" stop-color="#212121"/><stop offset="0.0109" stop-color="#212121"/><stop offset="0.0121" stop-color="#212121"/><stop offset="0.0134" stop-color="#212121"/><stop offset="0.0147" stop-color="#212121"/><stop offset="0.0160" stop-color="#212121"/><stop offset="0.0173" stop-color="#212121"/><stop offset="0.0185" stop-color="#212121"/><stop offset="0.0198" stop-color="#212121"/><stop offset="0.0211" stop-color="#212121"/><stop offset="0.0224" stop-color="#212121"/><stop offset="0.0237" stop-color="#212121"/><stop offset="0.0249" stop-color="#212121"/><stop offset="0.0262" stop-color="#212121"/><stop offset="0.0275" stop-color="#212121"/><stop offset="0.0288" stop-color="#212121"/><stop offset="0.0301" stop-color="#212121"/><stop offset="0.0313" stop-color="#212121"/><stop offset="0.0326" stop-color="#212121"/><stop offset="0.0339" stop-color="#222222"/><stop offset="0.0352" stop-color="#222222"/><stop offset="0.0364" stop-color="#222222"/><stop offset="0.0377" stop-color="#232323"/><stop offset="0.0390" stop-color="#232323"/><stop offset="0.0403" stop-color="#242424"/><stop offset="0.0416" stop-color="#252525"/><stop offset="0.0428" stop-color="#272727"/><stop offset="0.0441" stop-color="#292929"/><stop offset="0.0454" stop-color="#2b2b2b"/><stop offset="0.0467" stop-color="#2e2e2e"/><stop offset="0.0480" stop-color="#313131"/><stop offset="0.0492" stop-color="#343434"/><stop offset="0.0505" stop-color="#383838"/><stop offset="0.0518" stop-color="#3f3f3f"/><stop offset="0.0531" stop-color="#4e4e4e"/><stop offset="0.0543" stop-color="#696969"/><stop offset="0.0556" stop-color="#797979"/><stop offset="0.0569" stop-color="#7f7f7f"/><stop offset="0.0582" stop-color="#7f7f7f"/><stop offset="0.0595" stop-color="#7f7f7f"/><stop offset="0.0607" stop-color="#7f7f7f"/><stop offset="0.0620" stop-color="#797979"/><stop offset="0.0633" stop-color="#696969"/><stop offset="0.0646" stop-color="#4e4e4e"/><stop offset="0.0659" stop-color="#3f3f3f"/><stop offset="0.0671" stop-color="#3b3b3b"/><stop offset="0.0684" stop-color="#464646"/><stop offset="0.0697" stop-color="#4e4e4e"/><stop offset="0.0710" stop-color="#4e4e4e"/><stop offset="0.0723" stop-color="#464646"/><stop offset="0.0735" stop-color="#3b3b3b"/><stop offset="0.0748" stop-color="#313131"/><stop offset="0.0761" stop-color="#2b2b2b"/><stop offset="0.0774" stop-color="#282828"/><stop offset="0.0786" stop-color="#282828"/><stop offset="0.0799" stop-color="#272727"/><stop offset="0.0812" stop-color="#272727"/><stop offset="0.0825" stop-color="#262626"/><stop offset="0.0838" stop-color="#262626"/><stop offset="0.0850" stop-color="#272727"/><stop offset="0.0863" stop-color="#272727"/><stop offset="0.0876" stop-color="#282828"/><stop offset="0.0889" stop-color="#282828"/><stop offset="0.0902" stop-color="#2a2a2a"/><stop offset="0.0914" stop-color="#2b2b2b"/><stop offset="0.0927" stop-color="#2d2d2d"/><stop offset="0.0940" stop-color="#2f2f2f"/><stop offset="0.0953" stop-color="#323232"/><stop offset="0.0965" stop-color="#353535"/><stop offset="0.0978" stop-color="#383838"/><stop offset="0.0991" stop-color="#3b3b3b"/><stop offset="0.1004" stop-color="#3f3f3f"/><stop offset="0.1017" stop-color="#4e4e4e"/><stop offset="0.1029" stop-color="#696969"/><stop offset="0.1042" stop-color="#797979"/><stop offset="0.1055" stop-color="#7f7f7f"/><stop offset="0.1068" stop-color="#7f7f7f"/><stop offset="0.1081" stop-color="#7f7f7f"/><stop offset="0.1093" stop-color="#7f7f7f"/><stop offset="0.1106" stop-color="#797979"/><stop offset="0.1119" stop-color="#696969"/><stop offset="0.1132" stop-color="#4e4e4e"/><stop offset="0.1145" stop-color="#535353"/><stop offset="0.1157" stop-color="#5a5a5a"/><stop offset="0.1170" stop-color="#606060"/><stop offset="0.1183" stop-color="#636363"/><stop offset="0.1196" stop-color="#636363"/><stop offset="0.1208" stop-color="#606060"/><stop offset="0.1221" stop-color="#5a5a5a"/><stop offset="0.1234" stop-color="#535353"/><stop offset="0.1247" stop-color="#4a4a4a"/><stop offset="0.1260" stop-color="#424242"/><stop offset="0.1272" stop-color="#3a3a3a"/><stop offset="0.1285" stop-color="#343434"/><stop offset="0.1298" stop-color="#2f2f2f"/><stop offset="0.1311" stop-color="#2c2c2c"/><stop offset="0.1324" stop-color="#292929"/><stop offset="0.1336" stop-color="#282828"/><stop offset="0.1349" stop-color="#272727"/><stop offset="0.1362" stop-color="#272727"/><stop offset="0.1375" stop-color="#292929"/><stop offset="0.1387" stop-color="#2d2d2d"/><stop offset="0.1400" stop-color="#333333"/><stop offset="0.1413" stop-color="#3a3a3a"/><stop offset="0.1426" stop-color="#3f3f3f"/><stop offset="0.1439" stop-color="#3f3f3f"/><stop offset="0.1451" stop-color="#3a3a3a"/><stop offset="0.1464" stop-color="#333333"/><stop offset="0.1477" stop-color="#2d2d2d"/><stop offset="0.1490" stop-color="#292929"/><stop offset="0.1503" stop-color="#272727"/><stop offset="0.1515" stop-color="#262626"/><stop offset="0.1528" stop-color="#262626"/><stop offset="0.1541" stop-color="#262626"/><stop offset="0.1554" stop-color="#262626"/><stop offset="0.1566" stop-color="#262626"/><stop offset="0.1579" stop-color="#272727"/><stop offset="0.1592" stop-color="#2a2a2a"/><stop offset="0.1605" stop-color="#2e2e2e"/><stop offset="0.1618" stop-color="#343434"/><stop offset="0.1630" stop-color="#3d3d3d"/><stop offset="0.1643" stop-color="#454545"/><stop offset="0.1656" stop-color="#4c4c4c"/><stop offset="0.1669" stop-color="#4f4f4f"/><stop offset="0.1682" stop-color="#4c4c4c"/><stop offset="0.1694" stop-color="#454545"/><stop offset="0.1707" stop-color="#3d3d3d"/><stop offset="0.1720" stop-color="#343434"/><stop offset="0.1733" stop-color="#2e2e2e"/><stop offset="0.1746" stop-color="#2a2a2a"/><stop offset="0.1758" stop-color="#272727"/><stop offset="0.1771" stop-color="#262626"/><stop offset="0.1784" stop-color="#262626"/><stop offset="0.1797" stop-color="#262626"/><stop offset="0.1809" stop-color="#262626"/><stop offset="0.1822" stop-color="#262626"/><stop offset="0.1835" stop-color="#262626"/><stop offset="0.1848" stop-color="#262626"/><stop offset="0.1861" stop-color="#262626"/><stop offset="0.1873" stop-color="#262626"/><stop offset="0.1886" stop-color="#262626"/><stop offset="0.1899" stop-color="#262626"/><stop offset="0.1912" stop-color="#262626"/><stop offset="0.1925" stop-color="#262626"/><stop offset="0.1937" stop-color="#262626"/><stop offset="0.1950" stop-color="#262626"/><stop offset="0.1963" stop-color="#262626"/><stop offset="0.1976" stop-color="#262626"/><stop offset="0.1988" stop-color="#262626"/><stop offset="0.2001" stop-color="#262626"/><stop offset="0.2014" stop-color="#262626"/><stop offset="0.2027" stop-color="#262626"/><stop offset="0.2040" stop-color="#262626"/><stop offset="0.2052" stop-color="#262626"/><stop offset="0.2065" stop-color="#262626"/><stop offset="0.2078" stop-color="#262626"/><stop offset="0.2091" stop-color="#282828"/><stop offset="0.2104" stop-color="#2a2a2a"/><stop offset="0.2116" stop-color="#2f2f2f"/><stop offset="0.2129" stop-color="#363636"/><stop offset="0.2142" stop-color="#3f3f3f"/><stop offset="0.2155" stop-color="#494949"/><stop offset="0.2168" stop-color="#515151"/><stop offset="0.2180" stop-color="#545454"/><stop offset="0.2193" stop-color="#515151"/><stop offset="0.2206" stop-color="#494949"/><stop offset="0.2219" stop-color="#3f3f3f"/><stop offset="0.2231" stop-color="#363636"/><stop offset="0.2244" stop-color="#2f2f2f"/><stop offset="0.2257" stop-color="#2a2a2a"/><stop offset="0.2270" stop-color="#282828"/><stop offset="0.2283" stop-color="#262626"/><stop offset="0.2295" stop-color="#262626"/><stop offset="0.2308" stop-color="#262626"/><stop offset="0.2321" stop-color="#262626"/><stop offset="0.2334" stop-color="#272727"/><stop offset="0.2347" stop-color="#282828"/><stop offset="0.2359" stop-color="#2c2c2c"/><stop offset="0.2372" stop-color="#313131"/><stop offset="0.2385" stop-color="#363636"/><stop offset="0.2398" stop-color="#3a3a3a"/><stop offset="0.2410" stop-color="#3a3a3a"/><stop offset="0.2423" stop-color="#363636"/><stop offset="0.2436" stop-color="#313131"/><stop offset="0.2449" stop-color="#2c2c2c"/><stop offset="0.2462" stop-color="#2f2f2f"/><stop offset="0.2474" stop-color="#363636"/><stop offset="0.2487" stop-color="#3e3e3e"/><stop offset="0.2500" stop-color="#494949"/><stop offset="0.2513" stop-color="#535353"/><stop offset="0.2526" stop-color="#5a5a5a"/><stop offset="0.2538" stop-color="#5e5e5e"/><stop offset="0.2551" stop-color="#5d5d5d"/><stop offset="0.2564" stop-color="#575757"/><stop offset="0.2577" stop-color="#4e4e4e"/><stop offset="0.2590" stop-color="#434343"/><stop offset="0.2602" stop-color="#3a3a3a"/><stop offset="0.2615" stop-color="#323232"/><stop offset="0.2628" stop-color="#2d2d2d"/><stop offset="0.2641" stop-color="#292929"/><stop offset="0.2653" stop-color="#272727"/><stop offset="0.2666" stop-color="#262626"/><stop offset="0.2679" stop-color="#262626"/><stop offset="0.2692" stop-color="#262626"/><stop offset="0.2705" stop-color="#262626"/><stop offset="0.2717" stop-color="#262626"/><stop offset="0.2730" stop-color="#262626"/><stop offset="0.2743" stop-color="#262626"/><stop offset="0.2756" stop-color="#262626"/><stop offset="0.2769" stop-color="#262626"/><stop offset="0.2781" stop-color="#262626"/><stop offset="0.2794" stop-color="#262626"/><stop offset="0.2807" stop-color="#262626"/><stop offset="0.2820" stop-color="#272727"/><stop offset="0.2832" stop-color="#292929"/><stop offset="0.2845" stop-color="#2d2d2d"/><stop offset="0.2858" stop-color="#323232"/><stop offset="0.2871" stop-color="#3a3a3a"/><stop offset="0.2884" stop-color="#424242"/><stop offset="0.2896" stop-color="#484848"/><stop offset="0.2909" stop-color="#4a4a4a"/><stop offset="0.2922" stop-color="#484848"/><stop offset="0.2935" stop-color="#424242"/><stop offset="0.2948" stop-color="#3a3a3a"/><stop offset="0.2960" stop-color="#323232"/><stop offset="0.2973" stop-color="#2d2d2d"/><stop offset="0.2986" stop-color="#292929"/><stop offset="0.2999" stop-color="#272727"/><stop offset="0.3012" stop-color="#262626"/><stop offset="0.3024" stop-color="#262626"/><stop offset="0.3037" stop-color="#262626"/><stop offset="0.3050" stop-color="#262626"/><stop offset="0.3063" stop-color="#262626"/><stop offset="0.3075" stop-color="#262626"/><stop offset="0.3088" stop-color="#262626"/><stop offset="0.3101" stop-color="#272727"/><stop offset="0.3114" stop-color="#2a2a2a"/><stop offset="0.3127" stop-color="#2e2e2e"/><stop offset="0.3139" stop-color="#343434"/><stop offset="0.3152" stop-color="#393939"/><stop offset="0.3165" stop-color="#3b3b3b"/><stop offset="0.3178" stop-color="#393939"/><stop offset="0.3191" stop-color="#343434"/><stop offset="0.3203" stop-color="#2e2e2e"/><stop offset="0.3216" stop-color="#2a2a2a"/><stop offset="0.3229" stop-color="#272727"/><stop offset="0.3242" stop-color="#262626"/><stop offset="0.3254" stop-color="#262626"/><stop offset="0.3267" stop-color="#262626"/><stop offset="0.3280" stop-color="#262626"/><stop offset="0.3293" stop-color="#262626"/><stop offset="0.3306" stop-color="#262626"/><stop offset="0.3318" stop-color="#262626"/><stop offset="0.3331" stop-color="#262626"/><stop offset="0.3344" stop-color="#262626"/><stop offset="0.3357" stop-color="#262626"/><stop offset="0.3370" stop-color="#262626"/><stop offset="0.3382" stop-color="#262626"/><stop offset="0.3395" stop-color="#262626"/><stop offset="0.3408" stop-color="#262626"/><stop offset="0.3421" stop-color="#262626"/><stop offset="0.3434" stop-color="#262626"/><stop offset="0.3446" stop-color="#262626"/><stop offset="0.3459" stop-color="#262626"/><stop offset="0.3472" stop-color="#262626"/><stop offset="0.3485" stop-color="#262626"/><stop offset="0.3497" stop-color="#262626"/><stop offset="0.3510" stop-color="#262626"/><stop offset="0.3523" stop-color="#262626"/><stop offset="0.3536" stop-color="#262626"/><stop offset="0.3549" stop-color="#262626"/><stop offset="0.3561" stop-color="#262626"/><stop offset="0.3574" stop-color="#262626"/><stop offset="0.3587" stop-color="#282828"/><stop offset="0.3600" stop-color="#2a2a2a"/><stop offset="0.3613" stop-color="#2e2e2e"/><stop offset="0.3625" stop-color="#323232"/><stop offset="0.3638" stop-color="#353535"/><stop offset="0.3651" stop-color="#353535"/><stop offset="0.3664" stop-color="#323232"/><stop offset="0.3676" stop-color="#2e2e2e"/><stop offset="0.3689" stop-color="#2a2a2a"/><stop offset="0.3702" stop-color="#282828"/><stop offset="0.3715" stop-color="#262626"/><stop offset="0.3728" stop-color="#262626"/><stop offset="0.3740" stop-color="#262626"/><stop offset="0.3753" stop-color="#262626"/><stop offset="0.3766" stop-color="#262626"/><stop offset="0.3779" stop-color="#262626"/><stop offset="0.3792" stop-color="#262626"/><stop offset="0.3804" stop-color="#262626"/><stop offset="0.3817" stop-color="#262626"/><stop offset="0.3830" stop-color="#262626"/><stop offset="0.3843" stop-color="#262626"/><stop offset="0.3855" stop-color="#262626"/><stop offset="0.3868" stop-color="#262626"/><stop offset="0.3881" stop-color="#262626"/><stop offset="0.3894" stop-color="#262626"/><stop offset="0.3907" stop-color="#262626"/><stop offset="0.3919" stop-color="#262626"/><stop offset="0.3932" stop-color="#262626"/><stop offset="0.3945" stop-color="#262626"/><stop offset="0.3958" stop-color="#262626"/><stop offset="0.3971" stop-color="#262626"/><stop offset="0.3983" stop-color="#262626"/><stop offset="0.3996" stop-color="#272727"/><stop offset="0.4009" stop-color="#282828"/><stop offset="0.4022" stop-color="#2b2b2b"/><stop offset="0.4035" stop-color="#2f2f2f"/><stop offset="0.4047" stop-color="#343434"/><stop offset="0.4060" stop-color="#3a3a3a"/><stop offset="0.4073" stop-color="#414141"/><stop offset="0.4086" stop-color="#464646"/><stop offset="0.4098" stop-color="#4a4a4a"/><stop offset="0.4111" stop-color="#4a4a4a"/><stop offset="0.4124" stop-color="#464646"/><stop offset="0.4137" stop-color="#414141"/><stop offset="0.4150" stop-color="#3a3a3a"/><stop offset="0.4162" stop-color="#343434"/><stop offset="0.4175" stop-color="#2f2f2f"/><stop offset="0.4188" stop-color="#2b2b2b"/><stop offset="0.4201" stop-color="#282828"/><stop offset="0.4214" stop-color="#272727"/><stop offset="0.4226" stop-color="#262626"/><stop offset="0.4239" stop-color="#262626"/><stop offset="0.4252" stop-color="#262626"/><stop offset="0.4265" stop-color="#262626"/><stop offset="0.4277" stop-color="#262626"/><stop offset="0.4290" stop-color="#262626"/><stop offset="0.4303" stop-color="#262626"/><stop offset="0.4316" stop-color="#262626"/><stop offset="0.4329" stop-color="#262626"/><stop offset="0.4341" stop-color="#262626"/><stop offset="0.4354" stop-color="#262626"/><stop offset="0.4367" stop-color="#262626"/><stop offset="0.4380" stop-color="#262626"/><stop offset="0.4393" stop-color="#272727"/><stop offset="0.4405" stop-color="#282828"/><stop offset="0.4418" stop-color="#2a2a2a"/><stop offset="0.4431" stop-color="#2e2e2e"/><stop offset="0.4444" stop-color="#333333"/><stop offset="0.4457" stop-color="#3a3a3a"/><stop offset="0.4469" stop-color="#414141"/><stop offset="0.4482" stop-color="#484848"/><stop offset="0.4495" stop-color="#4d4d4d"/><stop offset="0.4508" stop-color="#4f4f4f"/><stop offset="0.4520" stop-color="#4d4d4d"/><stop offset="0.4533" stop-color="#484848"/><stop offset="0.4546" stop-color="#414141"/><stop offset="0.4559" stop-color="#3a3a3a"/><stop offset="0.4572" stop-color="#333333"/><stop offset="0.4584" stop-color="#303030"/><stop offset="0.4597" stop-color="#323232"/><stop offset="0.4610" stop-color="#353535"/><stop offset="0.4623" stop-color="#383838"/><stop offset="0.4636" stop-color="#3c3c3c"/><stop offset="0.4648" stop-color="#3f3f3f"/><stop offset="0.4661" stop-color="#434343"/><stop offset="0.4674" stop-color="#4a4a4a"/><stop offset="0.4687" stop-color="#696969"/><stop offset="0.4699" stop-color="#818181"/><stop offset="0.4712" stop-color="#8f8f8f"/><stop offset="0.4725" stop-color="#939393"/><stop offset="0.4738" stop-color="#949494"/><stop offset="0.4751" stop-color="#949494"/><stop offset="0.4763" stop-color="#939393"/><stop offset="0.4776" stop-color="#8f8f8f"/><stop offset="0.4789" stop-color="#818181"/><stop offset="0.4802" stop-color="#696969"/><stop offset="0.4815" stop-color="#4a4a4a"/><stop offset="0.4827" stop-color="#434343"/><stop offset="0.4840" stop-color="#3f3f3f"/><stop offset="0.4853" stop-color="#3c3c3c"/><stop offset="0.4866" stop-color="#383838"/><stop offset="0.4879" stop-color="#353535"/><stop offset="0.4891" stop-color="#373737"/><stop offset="0.4904" stop-color="#3e3e3e"/><stop offset="0.4917" stop-color="#474747"/><stop offset="0.4930" stop-color="#505050"/><stop offset="0.4942" stop-color="#5a5a5a"/><stop offset="0.4955" stop-color="#636363"/><stop offset="0.4968" stop-color="#6a6a6a"/><stop offset="0.4981" stop-color="#6d6d6d"/><stop offset="0.4994" stop-color="#6d6d6d"/><stop offset="0.5006" stop-color="#6a6a6a"/><stop offset="0.5019" stop-color="#636363"/><stop offset="0.5032" stop-color="#5a5a5a"/><stop offset="0.5045" stop-color="#505050"/><stop offset="0.5058" stop-color="#474747"/><stop offset="0.5070" stop-color="#3e3e3e"/><stop offset="0.5083" stop-color="#373737"/><stop offset="0.5096" stop-color="#313131"/><stop offset="0.5109" stop-color="#2d2d2d"/><stop offset="0.5121" stop-color="#2a2a2a"/><stop offset="0.5134" stop-color="#282828"/><stop offset="0.5147" stop-color="#272727"/><stop offset="0.5160" stop-color="#262626"/><stop offset="0.5173" stop-color="#262626"/><stop offset="0.5185" stop-color="#262626"/><stop offset="0.5198" stop-color="#262626"/><stop offset="0.5211" stop-color="#262626"/><stop offset="0.5224" stop-color="#262626"/><stop offset="0.5237" stop-color="#262626"/><stop offset="0.5249" stop-color="#262626"/><stop offset="0.5262" stop-color="#262626"/><stop offset="0.5275" stop-color="#262626"/><stop offset="0.5288" stop-color="#262626"/><stop offset="0.5301" stop-color="#262626"/><stop offset="0.5313" stop-color="#262626"/><stop offset="0.5326" stop-color="#272727"/><stop offset="0.5339" stop-color="#272727"/><stop offset="0.5352" stop-color="#292929"/><stop offset="0.5364" stop-color="#2c2c2c"/><stop offset="0.5377" stop-color="#313131"/><stop offset="0.5390" stop-color="#373737"/><stop offset="0.5403" stop-color="#404040"/><stop offset="0.5416" stop-color="#4a4a4a"/><stop offset="0.5428" stop-color="#555555"/><stop offset="0.5441" stop-color="#606060"/><stop offset="0.5454" stop-color="#686868"/><stop offset="0.5467" stop-color="#6d6d6d"/><stop offset="0.5480" stop-color="#6d6d6d"/><stop offset="0.5492" stop-color="#686868"/><stop offset="0.5505" stop-color="#606060"/><stop offset="0.5518" stop-color="#555555"/><stop offset="0.5531" stop-color="#4a4a4a"/><stop offset="0.5543" stop-color="#404040"/><stop offset="0.5556" stop-color="#373737"/><stop offset="0.5569" stop-color="#313131"/><stop offset="0.5582" stop-color="#2c2c2c"/><stop offset="0.5595" stop-color="#292929"/><stop offset="0.5607" stop-color="#272727"/><stop offset="0.5620" stop-color="#272727"/><stop offset="0.5633" stop-color="#262626"/><stop offset="0.5646" stop-color="#262626"/><stop offset="0.5659" stop-color="#262626"/><stop offset="0.5671" stop-color="#262626"/><stop offset="0.5684" stop-color="#262626"/><stop offset="0.5697" stop-color="#262626"/><stop offset="0.5710" stop-color="#262626"/><stop offset="0.5723" stop-color="#262626"/><stop offset="0.5735" stop-color="#262626"/><stop offset="0.5748" stop-color="#262626"/><stop offset="0.5761" stop-color="#262626"/><stop offset="0.5774" stop-color="#262626"/><stop offset="0.5786" stop-color="#262626"/><stop offset="0.5799" stop-color="#262626"/><stop offset="0.5812" stop-color="#262626"/><stop offset="0.5825" stop-color="#262626"/><stop offset="0.5838" stop-color="#262626"/><stop offset="0.5850" stop-color="#262626"/><stop offset="0.5863" stop-color="#262626"/><stop offset="0.5876" stop-color="#262626"/><stop offset="0.5889" stop-color="#262626"/><stop offset="0.5902" stop-color="#262626"/><stop offset="0.5914" stop-color="#262626"/><stop offset="0.5927" stop-color="#262626"/><stop offset="0.5940" stop-color="#262626"/><stop offset="0.5953" stop-color="#262626"/><stop offset="0.5965" stop-color="#262626"/><stop offset="0.5978" stop-color="#262626"/><stop offset="0.5991" stop-color="#262626"/><stop offset="0.6004" stop-color="#262626"/><stop offset="0.6017" stop-color="#262626"/><stop offset="0.6029" stop-color="#262626"/><stop offset="0.6042" stop-color="#262626"/><stop offset="0.6055" stop-color="#262626"/><stop offset="0.6068" stop-color="#262626"/><stop offset="0.6081" stop-color="#262626"/><stop offset="0.6093" stop-color="#262626"/><stop offset="0.6106" stop-color="#262626"/><stop offset="0.6119" stop-color="#262626"/><stop offset="0.6132" stop-color="#262626"/><stop offset="0.6145" stop-color="#262626"/><stop offset="0.6157" stop-color="#262626"/><stop offset="0.6170" stop-color="#262626"/><stop offset="0.6183" stop-color="#262626"/><stop offset="0.6196" stop-color="#262626"/><stop offset="0.6208" stop-color="#262626"/><stop offset="0.6221" stop-color="#262626"/><stop offset="0.6234" stop-color="#262626"/><stop offset="0.6247" stop-color="#262626"/><stop offset="0.6260" stop-color="#262626"/><stop offset="0.6272" stop-color="#262626"/><stop offset="0.6285" stop-color="#262626"/><stop offset="0.6298" stop-color="#262626"/><stop offset="0.6311" stop-color="#262626"/><stop offset="0.6324" stop-color="#262626"/><stop offset="0.6336" stop-color="#262626"/><stop offset="0.6349" stop-color="#262626"/><stop offset="0.6362" stop-color="#262626"/><stop offset="0.6375" stop-color="#262626"/><stop offset="0.6387" stop-color="#262626"/><stop offset="0.6400" stop-color="#262626"/><stop offset="0.6413" stop-color="#262626"/><stop offset="0.6426" stop-color="#262626"/><stop offset="0.6439" stop-color="#272727"/><stop offset="0.6451" stop-color="#282828"/><stop offset="0.6464" stop-color="#2a2a2a"/><stop offset="0.6477" stop-color="#2d2d2d"/><stop offset="0.6490" stop-color="#313131"/><stop offset="0.6503" stop-color="#363636"/><stop offset="0.6515" stop-color="#3d3d3d"/><stop offset="0.6528" stop-color="#444444"/><stop offset="0.6541" stop-color="#4b4b4b"/><stop offset="0.6554" stop-color="#515151"/><stop offset="0.6566" stop-color="#545454"/><stop offset="0.6579" stop-color="#545454"/><stop offset="0.6592" stop-color="#515151"/><stop offset="0.6605" stop-color="#4b4b4b"/><stop offset="0.6618" stop-color="#444444"/><stop offset="0.6630" stop-color="#3d3d3d"/><stop offset="0.6643" stop-color="#363636"/><stop offset="0.6656" stop-color="#313131"/><stop offset="0.6669" stop-color="#2d2d2d"/><stop offset="0.6682" stop-color="#2a2a2a"/><stop offset="0.6694" stop-color="#282828"/><stop offset="0.6707" stop-color="#272727"/><stop offset="0.6720" stop-color="#262626"/><stop offset="0.6733" stop-color="#262626"/><stop offset="0.6746" stop-color="#262626"/><stop offset="0.6758" stop-color="#262626"/><stop offset="0.6771" stop-color="#262626"/><stop offset="0.6784" stop-color="#262626"/><stop offset="0.6797" stop-color="#262626"/><stop offset="0.6809" stop-color="#262626"/><stop offset="0.6822" stop-color="#262626"/><stop offset="0.6835" stop-color="#262626"/><stop offset="0.6848" stop-color="#262626"/><stop offset="0.6861" stop-color="#262626"/><stop offset="0.6873" stop-color="#262626"/><stop offset="0.6886" stop-color="#262626"/><stop offset="0.6899" stop-color="#262626"/><stop offset="0.6912" stop-color="#262626"/><stop offset="0.6925" stop-color="#262626"/><stop offset="0.6937" stop-color="#262626"/><stop offset="0.6950" stop-color="#262626"/><stop offset="0.6963" stop-color="#262626"/><stop offset="0.6976" stop-color="#262626"/><stop offset="0.6988" stop-color="#262626"/><stop offset="0.7001" stop-color="#262626"/><stop offset="0.7014" stop-color="#262626"/><stop offset="0.7027" stop-color="#262626"/><stop offset="0.7040" stop-color="#262626"/><stop offset="0.7052" stop-color="#262626"/><stop offset="0.7065" stop-color="#262626"/><stop offset="0.7078" stop-color="#262626"/><stop offset="0.7091" stop-color="#262626"/><stop offset="0.7104" stop-color="#272727"/><stop offset="0.7116" stop-color="#272727"/><stop offset="0.7129" stop-color="#292929"/><stop offset="0.7142" stop-color="#2b2b2b"/><stop offset="0.7155" stop-color="#2e2e2e"/><stop offset="0.7168" stop-color="#323232"/><stop offset="0.7180" stop-color="#373737"/><stop offset="0.7193" stop-color="#3d3d3d"/><stop offset="0.7206" stop-color="#444444"/><stop offset="0.7219" stop-color="#4b4b4b"/><stop offset="0.7231" stop-color="#525252"/><stop offset="0.7244" stop-color="#565656"/><stop offset="0.7257" stop-color="#595959"/><stop offset="0.7270" stop-color="#595959"/><stop offset="0.7283" stop-color="#565656"/><stop offset="0.7295" stop-color="#525252"/><stop offset="0.7308" stop-color="#4b4b4b"/><stop offset="0.7321" stop-color="#444444"/><stop offset="0.7334" stop-color="#3d3d3d"/><stop offset="0.7347" stop-color="#393939"/><stop offset="0.7359" stop-color="#404040"/><stop offset="0.7372" stop-color="#474747"/><stop offset="0.7385" stop-color="#4f4f4f"/><stop offset="0.7398" stop-color="#565656"/><stop offset="0.7410" stop-color="#5b5b5b"/><stop offset="0.7423" stop-color="#5e5e5e"/><stop offset="0.7436" stop-color="#5e5e5e"/><stop offset="0.7449" stop-color="#5b5b5b"/><stop offset="0.7462" stop-color="#565656"/><stop offset="0.7474" stop-color="#4f4f4f"/><stop offset="0.7487" stop-color="#474747"/><stop offset="0.7500" stop-color="#404040"/><stop offset="0.7513" stop-color="#393939"/><stop offset="0.7526" stop-color="#333333"/><stop offset="0.7538" stop-color="#2f2f2f"/><stop offset="0.7551" stop-color="#2b2b2b"/><stop offset="0.7564" stop-color="#292929"/><stop offset="0.7577" stop-color="#282828"/><stop offset="0.7590" stop-color="#272727"/><stop offset="0.7602" stop-color="#262626"/><stop offset="0.7615" stop-color="#262626"/><stop offset="0.7628" stop-color="#262626"/><stop offset="0.7641" stop-color="#262626"/><stop offset="0.7653" stop-color="#262626"/><stop offset="0.7666" stop-color="#262626"/><stop offset="0.7679" stop-color="#262626"/><stop offset="0.7692" stop-color="#262626"/><stop offset="0.7705" stop-color="#262626"/><stop offset="0.7717" stop-color="#262626"/><stop offset="0.7730" stop-color="#262626"/><stop offset="0.7743" stop-color="#262626"/><stop offset="0.7756" stop-color="#262626"/><stop offset="0.7769" stop-color="#262626"/><stop offset="0.7781" stop-color="#262626"/><stop offset="0.7794" stop-color="#262626"/><stop offset="0.7807" stop-color="#262626"/><stop offset="0.7820" stop-color="#262626"/><stop offset="0.7832" stop-color="#262626"/><stop offset="0.7845" stop-color="#262626"/><stop offset="0.7858" stop-color="#262626"/><stop offset="0.7871" stop-color="#262626"/><stop offset="0.7884" stop-color="#262626"/><stop offset="0.7896" stop-color="#262626"/><stop offset="0.7909" stop-color="#262626"/><stop offset="0.7922" stop-color="#262626"/><stop offset="0.7935" stop-color="#262626"/><stop offset="0.7948" stop-color="#262626"/><stop offset="0.7960" stop-color="#262626"/><stop offset="0.7973" stop-color="#262626"/><stop offset="0.7986" stop-color="#262626"/><stop offset="0.7999" stop-color="#262626"/><stop offset="0.8012" stop-color="#262626"/><stop offset="0.8024" stop-color="#262626"/><stop offset="0.8037" stop-color="#262626"/><stop offset="0.8050" stop-color="#272727"/><stop offset="0.8063" stop-color="#282828"/><stop offset="0.8075" stop-color="#2c2c2c"/><stop offset="0.8088" stop-color="#313131"/><stop offset="0.8101" stop-color="#363636"/><stop offset="0.8114" stop-color="#3a3a3a"/><stop offset="0.8127" stop-color="#3a3a3a"/><stop offset="0.8139" stop-color="#363636"/><stop offset="0.8152" stop-color="#313131"/><stop offset="0.8165" stop-color="#2c2c2c"/><stop offset="0.8178" stop-color="#282828"/><stop offset="0.8191" stop-color="#272727"/><stop offset="0.8203" stop-color="#262626"/><stop offset="0.8216" stop-color="#262626"/><stop offset="0.8229" stop-color="#262626"/><stop offset="0.8242" stop-color="#262626"/><stop offset="0.8254" stop-color="#262626"/><stop offset="0.8267" stop-color="#262626"/><stop offset="0.8280" stop-color="#262626"/><stop offset="0.8293" stop-color="#262626"/><stop offset="0.8306" stop-color="#272727"/><stop offset="0.8318" stop-color="#272727"/><stop offset="0.8331" stop-color="#282828"/><stop offset="0.8344" stop-color="#282828"/><stop offset="0.8357" stop-color="#2a2a2a"/><stop offset="0.8370" stop-color="#2b2b2b"/><stop offset="0.8382" stop-color="#2d2d2d"/><stop offset="0.8395" stop-color="#2f2f2f"/><stop offset="0.8408" stop-color="#323232"/><stop offset="0.8421" stop-color="#353535"/><stop offset="0.8434" stop-color="#383838"/><stop offset="0.8446" stop-color="#3b3b3b"/><stop offset="0.8459" stop-color="#3f3f3f"/><stop offset="0.8472" stop-color="#4e4e4e"/><stop offset="0.8485" stop-color="#696969"/><stop offset="0.8497" stop-color="#797979"/><stop offset="0.8510" stop-color="#7f7f7f"/><stop offset="0.8523" stop-color="#7f7f7f"/><stop offset="0.8536" stop-color="#7f7f7f"/><stop offset="0.8549" stop-color="#7f7f7f"/><stop offset="0.8561" stop-color="#797979"/><stop offset="0.8574" stop-color="#696969"/><stop offset="0.8587" stop-color="#4e4e4e"/><stop offset="0.8600" stop-color="#3f3f3f"/><stop offset="0.8613" stop-color="#3b3b3b"/><stop offset="0.8625" stop-color="#383838"/><stop offset="0.8638" stop-color="#353535"/><stop offset="0.8651" stop-color="#323232"/><stop offset="0.8664" stop-color="#2f2f2f"/><stop offset="0.8676" stop-color="#2d2d2d"/><stop offset="0.8689" stop-color="#2b2b2b"/><stop offset="0.8702" stop-color="#2a2a2a"/><stop offset="0.8715" stop-color="#282828"/><stop offset="0.8728" stop-color="#282828"/><stop offset="0.8740" stop-color="#272727"/><stop offset="0.8753" stop-color="#272727"/><stop offset="0.8766" stop-color="#262626"/><stop offset="0.8779" stop-color="#262626"/><stop offset="0.8792" stop-color="#272727"/><stop offset="0.8804" stop-color="#292929"/><stop offset="0.8817" stop-color="#2d2d2d"/><stop offset="0.8830" stop-color="#333333"/><stop offset="0.8843" stop-color="#3d3d3d"/><stop offset="0.8855" stop-color="#484848"/><stop offset="0.8868" stop-color="#525252"/><stop offset="0.8881" stop-color="#585858"/><stop offset="0.8894" stop-color="#585858"/><stop offset="0.8907" stop-color="#525252"/><stop offset="0.8919" stop-color="#484848"/><stop offset="0.8932" stop-color="#3d3d3d"/><stop offset="0.8945" stop-color="#333333"/><stop offset="0.8958" stop-color="#353535"/><stop offset="0.8971" stop-color="#383838"/><stop offset="0.8983" stop-color="#3b3b3b"/><stop offset="0.8996" stop-color="#3f3f3f"/><stop offset="0.9009" stop-color="#444444"/><stop offset="0.9022" stop-color="#464646"/><stop offset="0.9035" stop-color="#4a4a4a"/><stop offset="0.9047" stop-color="#4e4e4e"/><stop offset="0.9060" stop-color="#5d5d5d"/><stop offset="0.9073" stop-color="#7e7e7e"/><stop offset="0.9086" stop-color="#9a9a9a"/><stop offset="0.9098" stop-color="#acacac"/><stop offset="0.9111" stop-color="#b5b5b5"/><stop offset="0.9124" stop-color="#b7b7b7"/><stop offset="0.9137" stop-color="#b8b8b8"/><stop offset="0.9150" stop-color="#b8b8b8"/><stop offset="0.9162" stop-color="#b7b7b7"/><stop offset="0.9175" stop-color="#b5b5b5"/><stop offset="0.9188" stop-color="#acacac"/><stop offset="0.9201" stop-color="#9a9a9a"/><stop offset="0.9214" stop-color="#7e7e7e"/><stop offset="0.9226" stop-color="#5d5d5d"/><stop offset="0.9239" stop-color="#4e4e4e"/><stop offset="0.9252" stop-color="#4a4a4a"/><stop offset="0.9265" stop-color="#464646"/><stop offset="0.9277" stop-color="#424242"/><stop offset="0.9290" stop-color="#3f3f3f"/><stop offset="0.9303" stop-color="#3b3b3b"/><stop offset="0.9316" stop-color="#383838"/><stop offset="0.9329" stop-color="#353535"/><stop offset="0.9341" stop-color="#323232"/><stop offset="0.9354" stop-color="#303030"/><stop offset="0.9367" stop-color="#2e2e2e"/><stop offset="0.9380" stop-color="#2c2c2c"/><stop offset="0.9393" stop-color="#2b2b2b"/><stop offset="0.9405" stop-color="#2a2a2a"/><stop offset="0.9418" stop-color="#292929"/><stop offset="0.9431" stop-color="#282828"/><stop offset="0.9444" stop-color="#272727"/><stop offset="0.9457" stop-color="#272727"/><stop offset="0.9469" stop-color="#272727"/><stop offset="0.9482" stop-color="#262626"/><stop offset="0.9495" stop-color="#262626"/><stop offset="0.9508" stop-color="#272727"/><stop offset="0.9520" stop-color="#282828"/><stop offset="0.9533" stop-color="#2b2b2b"/><stop offset="0.9546" stop-color="#2e2e2e"/><stop offset="0.9559" stop-color="#333333"/><stop offset="0.9572" stop-color="#3a3a3a"/><stop offset="0.9584" stop-color="#424242"/><stop offset="0.9597" stop-color="#4b4b4b"/><stop offset="0.9610" stop-color="#545454"/><stop offset="0.9623" stop-color="#5a5a5a"/><stop offset="0.9636" stop-color="#5e5e5e"/><stop offset="0.9648" stop-color="#5e5e5e"/><stop offset="0.9661" stop-color="#5a5a5a"/><stop offset="0.9674" stop-color="#545454"/><stop offset="0.9687" stop-color="#4b4b4b"/><stop offset="0.9699" stop-color="#424242"/><stop offset="0.9712" stop-color="#3a3a3a"/><stop offset="0.9725" stop-color="#333333"/><stop offset="0.9738" stop-color="#2e2e2e"/><stop offset="0.9751" stop-color="#303030"/><stop offset="0.9763" stop-color="#323232"/><stop offset="0.9776" stop-color="#353535"/><stop offset="0.9789" stop-color="#383838"/><stop offset="0.9802" stop-color="#3b3b3b"/><stop offset="0.9815" stop-color="#484848"/><stop offset="0.9827" stop-color="#5f5f5f"/><stop offset="0.9840" stop-color="#6d6d6d"/><stop offset="0.9853" stop-color="#727272"/><stop offset="0.9866" stop-color="#737373"/><stop offset="0.9879" stop-color="#737373"/><stop offset="0.9891" stop-color="#727272"/><stop offset="0.9904" stop-color="#6d6d6d"/><stop offset="0.9917" stop-color="#5f5f5f"/><stop offset="0.9930" stop-color="#484848"/><stop offset="0.9942" stop-color="#3b3b3b"/><stop offset="0.9955" stop-color="#383838"/><stop offset="0.9968" stop-color="#353535"/><stop offset="0.9981" stop-color="#323232"/><stop offset="0.9994" stop-color="#303030"/></linearGradient><filter id="fb" x="0" y="0" width="100%" height="100%" color-interpolation-filters="sRGB" filterUnits="userSpaceOnUse"><feTurbulence type="fractalNoise" baseFrequency="0.5 0.65" numOctaves="1" seed="5" result="n"/><feColorMatrix in="n" type="matrix" values="1 0 0 0 0 1 0 0 0 0 1 0 0 0 0 0 0 0 0 1" result="ng"/><feComposite in="SourceGraphic" in2="ng" operator="arithmetic" k1="-0.444" k2="1.222" k3="0.567" k4="-0.283" result="t"/><feComponentTransfer in="t"><feFuncR type="table" tableValues="0.000 0.000 0.000 0.000 0.000 0.000 0.000 0.000 0.000 0.000 0.000 0.000 0.000 0.000 0.000 0.000 0.000 0.000 0.000 0.000 0.000 0.000 0.000 0.000 0.000 0.062 0.125 0.188 0.250 0.312 0.375 0.438 0.500 0.562 0.625 0.688 0.750 0.812 0.875 0.938 1.000 1.000 1.000 1.000 1.000 1.000 1.000 1.000 1.000 1.000 1.000 1.000 1.000 1.000 1.000 1.000 1.000 0.938 0.875 0.812 0.750 0.688 0.625 0.562 0.500"/><feFuncG type="table" tableValues="0.000 0.000 0.000 0.000 0.000 0.000 0.000 0.000 0.000 0.062 0.125 0.188 0.250 0.312 0.375 0.438 0.500 0.562 0.625 0.688 0.750 0.812 0.875 0.938 1.000 1.000 1.000 1.000 1.000 1.000 1.000 1.000 1.000 1.000 1.000 1.000 1.000 1.000 1.000 1.000 1.000 0.938 0.875 0.812 0.750 0.688 0.625 0.562 0.500 0.438 0.375 0.312 0.250 0.188 0.125 0.062 0.000 0.000 0.000 0.000 0.000 0.000 0.000 0.000 0.000"/><feFuncB type="table" tableValues="0.500 0.562 0.625 0.688 0.750 0.812 0.875 0.938 1.000 1.000 1.000 1.000 1.000 1.000 1.000 1.000 1.000 1.000 1.000 1.000 1.000 1.000 1.000 1.000 1.000 0.938 0.875 0.812 0.750 0.688 0.625 0.562 0.500 0.438 0.375 0.312 0.250 0.188 0.125 0.062 0.000 0.000 0.000 0.000 0.000 0.000 0.000 0.000 0.000 0.000 0.000 0.000 0.000 0.000 0.000 0.000 0.000 0.000 0.000 0.000 0.000 0.000 0.000 0.000 0.000"/><feFuncA type="linear" slope="0" intercept="1"/></feComponentTransfer></filter></defs><g filter="url(#fb)"><rect x="0" y="0" width="782" height="138" fill="url(#gb)"/><rect x="39" y="13" width="20" height="1" fill="#000" fill-opacity="0.4"/><rect x="77" y="13" width="23" height="1" fill="#000" fill-opacity="0.4"/><rect x="363" y="13" width="35" height="1" fill="#000" fill-opacity="0.4"/><rect x="659" y="13" width="17" height="1" fill="#000" fill-opacity="0.4"/><rect x="697" y="13" width="38" height="1" fill="#000" fill-opacity="0.4"/><rect x="764" y="13" width="17" height="1" fill="#000" fill-opacity="0.4"/><rect x="39" y="18" width="20" height="1" fill="#000" fill-opacity="0.4"/><rect x="77" y="18" width="23" height="1" fill="#000" fill-opacity="0.4"/><rect x="363" y="18" width="35" height="1" fill="#000" fill-opacity="0.4"/><rect x="659" y="18" width="17" height="1" fill="#000" fill-opacity="0.4"/><rect x="697" y="18" width="38" height="1" fill="#000" fill-opacity="0.4"/><rect x="764" y="18" width="17" height="1" fill="#000" fill-opacity="0.4"/><rect x="39" y="24" width="20" height="1" fill="#000" fill-opacity="0.4"/><rect x="77" y="24" width="23" height="1" fill="#000" fill-opacity="0.4"/><rect x="363" y="24" width="35" height="1" fill="#000" fill-opacity="0.4"/><rect x="659" y="24" width="17" height="1" fill="#000" fill-opacity="0.4"/><rect x="697" y="24" width="38" height="1" fill="#000" fill-opacity="0.4"/><rect x="764" y="24" width="17" height="1" fill="#000" fill-opacity="0.4"/><rect x="39" y="30" width="20" height="1" fill="#000" fill-opacity="0.4"/><rect x="77" y="30" width="23" height="1" fill="#000" fill-opacity="0.4"/><rect x="363" y="30" width="35" height="1" fill="#000" fill-opacity="0.4"/><rect x="659" y="30" width="17" height="1" fill="#000" fill-opacity="0.4"/><rect x="697" y="30" width="38" height="1" fill="#000" fill-opacity="0.4"/><rect x="764" y="30" width="17" height="1" fill="#000" fill-opacity="0.4"/><rect x="39" y="36" width="20" height="1" fill="#000" fill-opacity="0.4"/><rect x="77" y="36" width="23" height="1" fill="#000" fill-opacity="0.4"/><rect x="363" y="36" width="35" height="1" fill="#000" fill-opacity="0.4"/><rect x="659" y="36" width="17" height="1" fill="#000" fill-opacity="0.4"/><rect x="697" y="36" width="38" height="1" fill="#000" fill-opacity="0.4"/><rect x="764" y="36" width="17" height="1" fill="#000" fill-opacity="0.4"/><rect x="39" y="43" width="20" height="1" fill="#000" fill-opacity="0.4"/><rect x="77" y="43" width="23" height="1" fill="#000" fill-opacity="0.4"/><rect x="363" y="43" width="35" height="1" fill="#000" fill-opacity="0.4"/><rect x="659" y="43" width="17" height="1" fill="#000" fill-opacity="0.4"/><rect x="697" y="43" width="38" height="1" fill="#000" fill-opacity="0.4"/><rect x="764" y="43" width="17" height="1" fill="#000" fill-opacity="0.4"/><rect x="39" y="54" width="20" height="1" fill="#000" fill-opacity="0.4"/><rect x="77" y="54" width="23" height="1" fill="#000" fill-opacity="0.4"/><rect x="363" y="54" width="35" height="1" fill="#000" fill-opacity="0.4"/><rect x="659" y="54" width="17" height="1" fill="#000" fill-opacity="0.4"/><rect x="697" y="54" width="38" height="1" fill="#000" fill-opacity="0.4"/><rect x="764" y="54" width="17" height="1" fill="#000" fill-opacity="0.4"/><rect x="39" y="83" width="20" height="1" fill="#000" fill-opacity="0.4"/><rect x="77" y="83" width="23" height="1" fill="#000" fill-opacity="0.4"/><rect x="363" y="83" width="35" height="1" fill="#000" fill-opacity="0.4"/><rect x="659" y="83" width="17" height="1" fill="#000" fill-opacity="0.4"/><rect x="697" y="83" width="38" height="1" fill="#000" fill-opacity="0.4"/><rect x="764" y="83" width="17" height="1" fill="#000" fill-opacity="0.4"/><rect x="39" y="88" width="20" height="1" fill="#000" fill-opacity="0.4"/><rect x="77" y="88" width="23" height="1" fill="#000" fill-opacity="0.4"/><rect x="363" y="88" width="35" height="1" fill="#000" fill-opacity="0.4"/><rect x="659" y="88" width="17" height="1" fill="#000" fill-opacity="0.4"/><rect x="697" y="88" width="38" height="1" fill="#000" fill-opacity="0.4"/><rect x="764" y="88" width="17" height="1" fill="#000" fill-opacity="0.4"/><rect x="39" y="94" width="20" height="1" fill="#000" fill-opacity="0.4"/><rect x="77" y="94" width="23" height="1" fill="#000" fill-opacity="0.4"/><rect x="363" y="94" width="35" height="1" fill="#000" fill-opacity="0.4"/><rect x="659" y="94" width="17" height="1" fill="#000" fill-opacity="0.4"/><rect x="697" y="94" width="38" height="1" fill="#000" fill-opacity="0.4"/><rect x="764" y="94" width="17" height="1" fill="#000" fill-opacity="0.4"/><rect x="39" y="101" width="20" height="1" fill="#000" fill-opacity="0.4"/><rect x="77" y="101" width="23" height="1" fill="#000" fill-opacity="0.4"/><rect x="363" y="101" width="35" height="1" fill="#000" fill-opacity="0.4"/><rect x="659" y="101" width="17" height="1" fill="#000" fill-opacity="0.4"/><rect x="697" y="101" width="38" height="1" fill="#000" fill-opacity="0.4"/><rect x="764" y="101" width="17" height="1" fill="#000" fill-opacity="0.4"/><rect x="39" y="107" width="20" height="1" fill="#000" fill-opacity="0.4"/><rect x="77" y="107" width="23" height="1" fill="#000" fill-opacity="0.4"/><rect x="363" y="107" width="35" height="1" fill="#000" fill-opacity="0.4"/><rect x="659" y="107" width="17" height="1" fill="#000" fill-opacity="0.4"/><rect x="697" y="107" width="38" height="1" fill="#000" fill-opacity="0.4"/><rect x="764" y="107" width="17" height="1" fill="#000" fill-opacity="0.4"/><rect x="39" y="113" width="20" height="1" fill="#000" fill-opacity="0.4"/><rect x="77" y="113" width="23" height="1" fill="#000" fill-opacity="0.4"/><rect x="363" y="113" width="35" height="1" fill="#000" fill-opacity="0.4"/><rect x="659" y="113" width="17" height="1" fill="#000" fill-opacity="0.4"/><rect x="697" y="113" width="38" height="1" fill="#000" fill-opacity="0.4"/><rect x="764" y="113" width="17" height="1" fill="#000" fill-opacity="0.4"/><rect x="39" y="118" width="20" height="1" fill="#000" fill-opacity="0.4"/><rect x="77" y="118" width="23" height="1" fill="#000" fill-opacity="0.4"/><rect x="363" y="118" width="35" height="1" fill="#000" fill-opacity="0.4"/><rect x="659" y="118" width="17" height="1" fill="#000" fill-opacity="0.4"/><rect x="697" y="118" width="38" height="1" fill="#000" fill-opacity="0.4"/><rect x="764" y="118" width="17" height="1" fill="#000" fill-opacity="0.4"/><rect x="39" y="126" width="20" height="1" fill="#000" fill-opacity="0.4"/><rect x="77" y="126" width="23" height="1" fill="#000" fill-opacity="0.4"/><rect x="363" y="126" width="35" height="1" fill="#000" fill-opacity="0.4"/><rect x="659" y="126" width="17" height="1" fill="#000" fill-opacity="0.4"/><rect x="697" y="126" width="38" height="1" fill="#000" fill-opacity="0.4"/><rect x="764" y="126" width="17" height="1" fill="#000" fill-opacity="0.4"/><rect x="39" y="133" width="20" height="1" fill="#000" fill-opacity="0.4"/><rect x="77" y="133" width="23" height="1" fill="#000" fill-opacity="0.4"/><rect x="363" y="133" width="35" height="1" fill="#000" fill-opacity="0.4"/><rect x="659" y="133" width="17" height="1" fill="#000" fill-opacity="0.4"/><rect x="697" y="133" width="38" height="1" fill="#000" fill-opacity="0.4"/><rect x="764" y="133" width="17" height="1" fill="#000" fill-opacity="0.4"/></g></svg>
<div class="a" style="left:39px;top:305px;width:783px;height:1px;background:#141438"></div><div class="a" style="left:39px;top:305px;width:1px;height:138px;background:#141438"></div>
<div class="a" style="left:826px;top:305px;width:5px;height:137px;background:linear-gradient(#800000,#ff0000 12.5%,#ff8000 25%,#ffff00 37.5%,#80ff80 50%,#00ffff 62.5%,#0080ff 75%,#0000ff 87.5%,#000080)"></div>
<div class="tk" style="left:-3.2px;top:438.9px;width:40px;text-align:right;transform-origin:100% 50%;">0</div>
<div class="tk" style="left:-3.2px;top:422.9px;width:40px;text-align:right;transform-origin:100% 50%;">2</div>
<div class="tk" style="left:-3.2px;top:406.9px;width:40px;text-align:right;transform-origin:100% 50%;">4</div>
<div class="tk" style="left:-3.2px;top:391.0px;width:40px;text-align:right;transform-origin:100% 50%;">6</div>
<div class="tk" style="left:-3.2px;top:375.0px;width:40px;text-align:right;transform-origin:100% 50%;">8</div>
<div class="tk" style="left:-3.2px;top:359.0px;width:40px;text-align:right;transform-origin:100% 50%;">10</div>
<div class="tk" style="left:-3.2px;top:343.0px;width:40px;text-align:right;transform-origin:100% 50%;">12</div>
<div class="tk" style="left:-3.2px;top:327.0px;width:40px;text-align:right;transform-origin:100% 50%;">14</div>
<div class="tk" style="left:-3.2px;top:311.1px;width:40px;text-align:right;transform-origin:100% 50%;">16</div>
<div class="tk" style="left:29.4px;top:447.1px;width:40px;text-align:center;">-1</div>
<div class="tk" style="left:105.7px;top:447.1px;width:40px;text-align:center;">-0.8</div>
<div class="tk" style="left:182.1px;top:447.1px;width:40px;text-align:center;">-0.6</div>
<div class="tk" style="left:258.4px;top:447.1px;width:40px;text-align:center;">-0.4</div>
<div class="tk" style="left:334.7px;top:447.1px;width:40px;text-align:center;">-0.2</div>
<div class="tk" style="left:411.0px;top:447.1px;width:40px;text-align:center;">0</div>
<div class="tk" style="left:487.4px;top:447.1px;width:40px;text-align:center;">0.2</div>
<div class="tk" style="left:563.7px;top:447.1px;width:40px;text-align:center;">0.4</div>
<div class="tk" style="left:640.0px;top:447.1px;width:40px;text-align:center;">0.6</div>
<div class="tk" style="left:716.4px;top:447.1px;width:40px;text-align:center;">0.8</div>
<div class="tk" style="left:792.7px;top:447.1px;width:40px;text-align:center;">1</div>
<div class="tkc" style="left:825.6px;top:301.9px;width:40px;text-align:center;">0dB</div>
<div class="tkc" style="left:825.6px;top:319.0px;width:40px;text-align:center;">-6dB</div>
<div class="tkc" style="left:825.6px;top:336.1px;width:40px;text-align:center;">-12dB</div>
<div class="tkc" style="left:825.6px;top:353.2px;width:40px;text-align:center;">-18dB</div>
<div class="tkc" style="left:825.6px;top:370.3px;width:40px;text-align:center;">-25dB</div>
<div class="tkc" style="left:825.6px;top:387.4px;width:40px;text-align:center;">-31dB</div>
<div class="tkc" style="left:825.6px;top:404.5px;width:40px;text-align:center;">-37dB</div>
<div class="tkc" style="left:825.6px;top:421.6px;width:40px;text-align:center;">-43dB</div>
<div class="tkc" style="left:825.6px;top:438.7px;width:40px;text-align:center;">-50dB</div>
<div class="t b" style="left:400px;top:460.5px;font-size:8px;line-height:8px;color:#111;letter-spacing:-0.25px">Frequency (MHz)</div>
<div class="t b" style="left:-8px;top:369px;font-size:8px;line-height:8px;color:#111;letter-spacing:-0.25px;transform:rotate(-90deg);width:56px;text-align:center">Time (s)</div>
<div class="grp" style="left:862px;top:289px;width:89px;height:44px"></div>
<div class="t b" style="left:864.5px;top:285.4px;background:#cfcfcf;padding-right:2px">Options</div>
<div class="cb" style="left:866px;top:296.5px"></div>
<div class="t" style="left:878px;top:297.0px">Average</div>
<div class="t" style="left:864.5px;top:307.8px;color:#9c9c9c">Avg Alpha: 0.1333</div>
<div class="groove" style="left:866px;top:322.2px;width:81px"></div>
<div class="gfill" style="left:866px;top:322.2px;width:55px"></div>
<div class="handle" style="left:917px;top:319.7px"></div>
<div class="grp" style="left:862px;top:339px;width:89px;height:92px"></div>
<div class="t b" style="left:864.5px;top:335.5px;background:#cfcfcf;padding-right:2px">Axes Options</div>
<div class="t" style="left:864.5px;top:348.8px">Time Scale:</div>
<div class="btn" style="left:926px;top:345.3px;width:10px;height:14px;line-height:12px;font-size:6px">+</div>
<div class="btn" style="left:937px;top:345.3px;width:11px;height:14px;line-height:12px;font-size:6px">-</div>
<div class="t" style="left:864.5px;top:364.8px">Dyn Range:</div>
<div class="btn" style="left:926px;top:361.3px;width:10px;height:14px;line-height:12px;font-size:6px">+</div>
<div class="btn" style="left:937px;top:361.3px;width:11px;height:14px;line-height:12px;font-size:6px">-</div>
<div class="t" style="left:864.5px;top:380.2px">Ref Level:</div>
<div class="btn" style="left:926px;top:376.7px;width:10px;height:14px;line-height:12px;font-size:6px">+</div>
<div class="btn" style="left:937px;top:376.7px;width:11px;height:14px;line-height:12px;font-size:6px">-</div>
<div class="t" style="left:864.5px;top:397.0px">Color:</div>
<div class="btn" style="left:886px;top:393.5px;width:62px;height:14px;line-height:12px;text-align:left;padding-left:4px">RGB2</div>
<div class="a" style="left:935px;top:395.0px;width:1px;height:11px;background:#c2c2c2"></div>
<svg class="a" style="left:938px;top:395.5px" width="7" height="10"><path d="M1.4 3.6L3.4 1.4L5.4 3.6z M1.4 6.4L3.4 8.6L5.4 6.4z" fill="#505050" stroke="none"/></svg>
<div class="btn" style="left:865px;top:410.0px;width:83px;height:18.3px;line-height:16.3px;border-color:#7f95ad;box-shadow:inset 0 0 0 1px #c8d6e4;">Autoscale</div>
<div class="btn" style="left:862px;top:434.3px;width:89px;height:16.7px;line-height:14.7px">Clear</div>
<div class="btn" style="left:862px;top:453.3px;width:89px;height:16.7px;line-height:14.7px">Stop</div>

<!-- ===== bottom controls ===== -->
<div class="a" style="left:11px;top:493px;width:465px;height:54px;border:1px solid #ababab;border-radius:0 2px 2px 2px"></div>
<div class="tab" style="left:34px;top:478px;width:22px;height:16px;line-height:14.5px">tab2</div>
<div class="tab" style="left:58px;top:478px;width:22px;height:16px;line-height:14.5px">tab3</div>
<div class="tab tabsel" style="left:11px;top:477px;width:22px;height:18px;line-height:14.5px">tab1</div>
<div class="t" style="left:21px;top:514px">select:</div>
<div class="field" style="left:43px;top:510.5px;width:49px;height:14px;line-height:12.5px">0</div>
<div class="groove" style="left:23px;top:530px;width:69px"></div>
<div class="handle" style="left:23.5px;top:527.5px"></div>
<div class="t" style="left:96px;top:514px">width:</div>
<div class="field" style="left:117px;top:510.5px;width:49px;height:14px;line-height:12.5px">1k</div>
<div class="groove" style="left:98px;top:530px;width:68px"></div>
<div class="handle" style="left:98.5px;top:527.5px"></div>
<div class="t" style="left:170px;top:514px">fine(khz):</div>
<div class="field" style="left:202px;top:510.5px;width:49px;height:14px;line-height:12.5px">0</div>
<div class="groove" style="left:172px;top:530px;width:78px"></div>
<div class="handle" style="left:172.5px;top:527.5px"></div>

<div class="t" style="left:479px;top:481px">coarse (mhz):</div>
<div class="field" style="left:524px;top:477px;width:429px;height:15px;line-height:13px">392</div>
<div class="gfill" style="left:481px;top:517px;width:106px"></div>
<div class="groove" style="left:587px;top:517px;width:366px"></div>
<div class="handle" style="left:583px;top:515px"></div>

<div class="t" style="left:1px;top:559px">tune:</div>
<div class="field" style="left:19px;top:555px;width:939px;height:14px;line-height:12px">0</div>
<div class="a" style="left:580px;top:551px;width:195px;height:20px;background:#ffffff"></div>
<div class="gfill" style="left:2px;top:574.5px;width:478px"></div>
<div class="groove" style="left:480px;top:574.5px;width:477px"></div>
<div class="handle" style="left:475.5px;top:572.5px"></div>
<div class="t" style="left:1px;top:589px">variable_chooser_0:</div>
<div class="btn" style="left:924px;top:584px;width:34px;height:15px;line-height:14px;text-align:left;padding-left:4.5px;font-size:7.2px;background:linear-gradient(#e6e6e6,#d6d6d6)">19.0</div>
<div class="a" style="left:945px;top:587px;width:1px;height:10px;background:#c4c4c4"></div>
<svg class="a" style="left:948px;top:586px" width="8" height="11"><path d="M1.5 4.5L4 1.8L6.5 4.5z M1.5 7.2L4 9.9L6.5 7.2z" fill="#4a4a4a"/></svg>
</body></html>
